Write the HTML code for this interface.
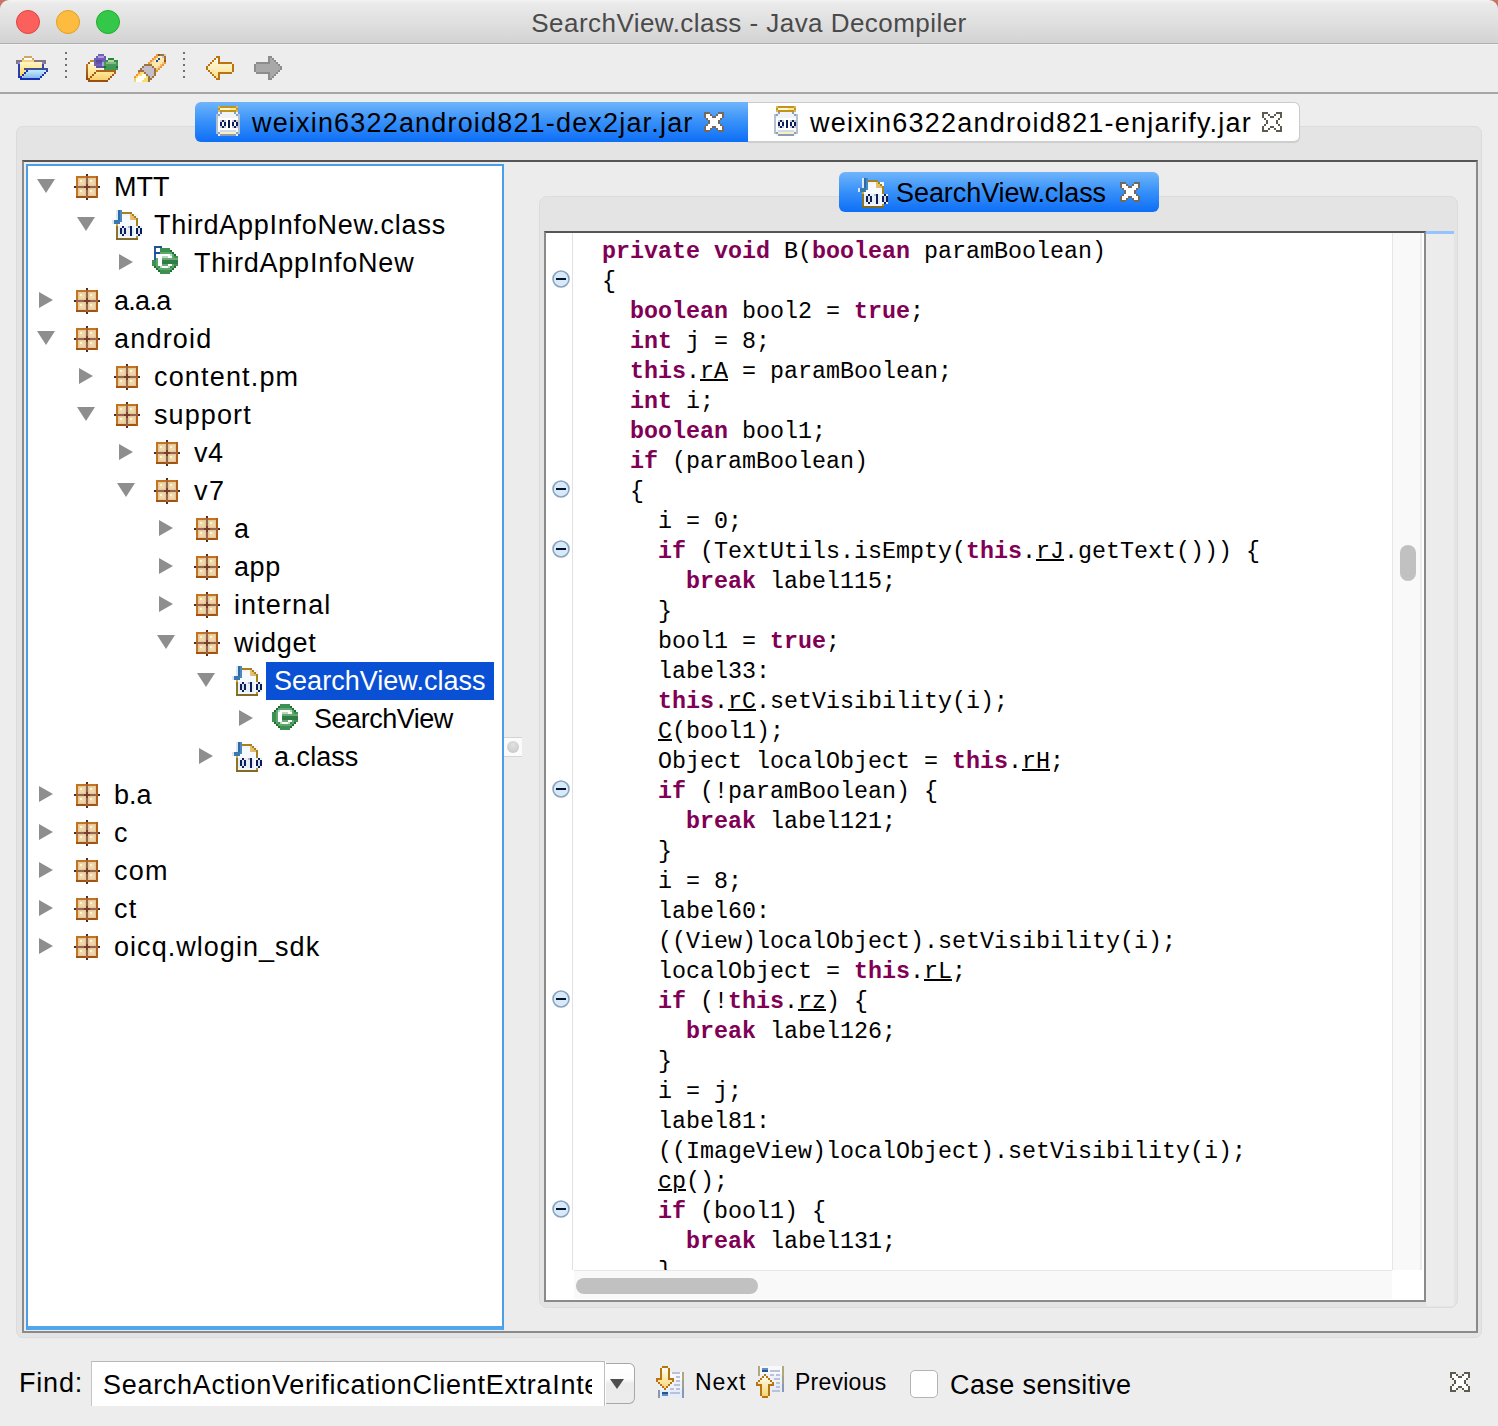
<!DOCTYPE html><html><head><meta charset="utf-8"><style>
*{margin:0;padding:0;box-sizing:border-box}
html,body{width:1498px;height:1426px;overflow:hidden;background:#ededed;font-family:"Liberation Sans",sans-serif;}
.a{position:absolute}
svg{overflow:visible}
#title{left:0;top:0;width:1498px;height:44px;background:linear-gradient(#f4f4f4,#ebebeb 3px,#d3d3d3);border-bottom:1px solid #afafaf;border-radius:9px 9px 0 0}
#title .t{left:0;width:1498px;top:-2px;text-align:center;font-size:26px;color:#4a4a4a;letter-spacing:0.45px;line-height:50px}
.tl{width:24px;height:24px;border-radius:50%;top:10px}
#tb{left:0;top:44px;width:1498px;height:48px;background:#ededed;border-top:1px solid #f3f3f3}
#tbline{left:0;top:92px;width:1498px;height:1.5px;background:#a6a6a6}
.sep{width:2px;height:26px;top:52px;background:repeating-linear-gradient(#707070 0 2px,transparent 2px 6px)}
.tab{height:40px;border-radius:6px}
.sel{background:linear-gradient(#70b5fb,#3b93f9 45%,#0d6ef7);}
.txt{white-space:nowrap;line-height:50px;font-size:27px;color:#000}
.tri{width:0;height:0}
.code{font-family:"Liberation Mono",monospace;white-space:pre;color:#000;left:1px;height:30px;line-height:30px;font-size:23.33px}
.k{color:#7f0055;font-weight:bold}
.u{text-decoration:underline;text-underline-offset:1px;text-decoration-thickness:1.5px}
</style></head><body>
<div class="a" style="left:0;top:0;width:12px;height:12px;background:#c57766"></div><div class="a" style="left:1486px;top:0;width:12px;height:12px;background:#c57766"></div>
<div id="title" class="a"><div class="a t">SearchView.class - Java Decompiler</div>
<div class="a tl" style="left:16px;background:#fc605c;border:1px solid #e0443e"></div>
<div class="a tl" style="left:56px;background:#fdbc40;border:1px solid #dea123"></div>
<div class="a tl" style="left:96px;background:#34c84a;border:1px solid #1dad2b"></div>
</div>
<div id="tb" class="a"></div><div id="tbline" class="a"></div>
<div class="a sep" style="left:65px"></div><div class="a sep" style="left:183px"></div>
<svg class="a" style="left:12px;top:50px" width="40" height="36" viewBox="0 0 40 36"><g shape-rendering="crispEdges"><defs><linearGradient id="fy" x1="0" y1="0" x2="0" y2="1"><stop offset="0" stop-color="#fff6c4"/><stop offset="1" stop-color="#ffd860"/></linearGradient><linearGradient id="fb" x1="0" y1="0" x2="0" y2="1"><stop offset="0" stop-color="#bff0ff"/><stop offset="1" stop-color="#8cb8ee"/></linearGradient></defs><rect x="12" y="6" width="8" height="2" fill="#d3a564"/><rect x="10" y="8" width="2" height="2" fill="#d3a564"/><rect x="20" y="8" width="2" height="2" fill="#d3a564"/><rect x="12" y="8" width="8" height="2" fill="#ffffff"/><rect x="4" y="10" width="30" height="4" fill="#8a7283"/><rect x="10" y="10" width="12" height="2" fill="#f4d484"/><rect x="8" y="12" width="22" height="14" fill="url(#fy)"/><rect x="6" y="12" width="2" height="16" fill="#2a3eb0"/><rect x="6" y="12" width="2" height="2" fill="#7090d8"/><rect x="30" y="12" width="2" height="6" fill="#3848a8"/><rect x="30" y="12" width="2" height="2" fill="#7090d8"/><path d="M16 20 H34 L28 28 H10 Z" fill="url(#fb)"/><rect x="12" y="18" width="24" height="2" fill="#424c9a"/><rect x="34" y="20" width="2" height="2" fill="#2a3eb0"/><rect x="32" y="22" width="2" height="2" fill="#1c34b0"/><rect x="30" y="24" width="2" height="2" fill="#1c34b0"/><rect x="28" y="26" width="2" height="2" fill="#1c34b0"/><rect x="14" y="20" width="2" height="2" fill="#1c34b0"/><rect x="12" y="22" width="2" height="2" fill="#1c34b0"/><rect x="10" y="24" width="2" height="2" fill="#1c34b0"/><rect x="6" y="26" width="4" height="2" fill="#1c34b0"/><rect x="8" y="28" width="20" height="2" fill="#1232b0"/><rect x="12" y="20" width="2" height="2" fill="#ffe070"/><rect x="10" y="22" width="2" height="2" fill="#ffdc60"/><rect x="8" y="24" width="2" height="2" fill="#ffd850"/></g></svg>
<svg class="a" style="left:82px;top:50px" width="40" height="36" viewBox="0 0 40 36"><g shape-rendering="crispEdges"><defs><linearGradient id="f2y" x1="0" y1="0" x2="0" y2="1"><stop offset="0" stop-color="#fff4c8"/><stop offset="1" stop-color="#ffd870"/></linearGradient><linearGradient id="f2f" x1="0" y1="0" x2="0" y2="1"><stop offset="0" stop-color="#ffe898"/><stop offset="1" stop-color="#f8d070"/></linearGradient><linearGradient id="f2s" x1="0" y1="0" x2="0" y2="1"><stop offset="0" stop-color="#c87a20"/><stop offset="1" stop-color="#8c4410"/></linearGradient></defs><rect x="8" y="10" width="4" height="2" fill="#d08a22"/><rect x="6" y="12" width="2" height="2" fill="#a65412"/><rect x="8" y="12" width="4" height="2" fill="#ffffff"/><rect x="6" y="14" width="8" height="16" fill="url(#f2y)"/><rect x="14" y="16" width="10" height="4" fill="#fff6d0"/><rect x="4" y="14" width="2" height="16" fill="url(#f2s)"/><rect x="16" y="4" width="6" height="2" fill="#7462b4"/><rect x="14" y="6" width="10" height="2" fill="#6c5cb0"/><rect x="16" y="6" width="6" height="2" fill="#a8a0d8"/><rect x="12" y="8" width="12" height="8" fill="#6e60b4"/><rect x="14" y="10" width="6" height="2" fill="#5848a0"/><rect x="14" y="12" width="6" height="2" fill="#6454a8"/><rect x="20" y="12" width="2" height="4" fill="#b0a0e0"/><rect x="14" y="16" width="8" height="2" fill="#6050a8"/><rect x="26" y="8" width="6" height="2" fill="#1e8a3a"/><rect x="24" y="10" width="12" height="2" fill="#2a9444"/><rect x="26" y="10" width="6" height="2" fill="#b8d898"/><rect x="22" y="12" width="14" height="8" fill="#3f9a55"/><rect x="24" y="12" width="10" height="2" fill="#88b888"/><rect x="22" y="14" width="14" height="2" fill="#4a9a5a"/><rect x="22" y="16" width="2" height="2" fill="#1a7030"/><rect x="34" y="16" width="2" height="2" fill="#1a7030"/><path d="M14 22 H32 V24 L26 30 H6 Z" fill="url(#f2f)"/><rect x="14" y="20" width="20" height="2" fill="#b06418"/><rect x="32" y="22" width="2" height="2" fill="#b06418"/><rect x="30" y="24" width="2" height="2" fill="#a85a12"/><rect x="28" y="26" width="2" height="2" fill="#a85a12"/><rect x="26" y="28" width="2" height="2" fill="#a85a12"/><rect x="12" y="22" width="2" height="2" fill="#a85a12"/><rect x="10" y="24" width="2" height="2" fill="#a85a12"/><rect x="8" y="26" width="2" height="2" fill="#a85a12"/><rect x="6" y="28" width="2" height="2" fill="#a85a12"/><rect x="6" y="30" width="20" height="2" fill="#9a5010"/></g></svg>
<svg class="a" style="left:130px;top:50px" width="40" height="34" viewBox="0 0 40 34"><g shape-rendering="crispEdges"><rect x="26" y="4" width="2" height="2" fill="#f2962a"/><rect x="28" y="4" width="2" height="2" fill="#7a5a38"/><rect x="30" y="4" width="4" height="2" fill="#9c7444"/><rect x="34" y="4" width="2" height="2" fill="#e8c890"/><rect x="24" y="6" width="2" height="2" fill="#f2962a"/><rect x="26" y="6" width="2" height="2" fill="#f4b050"/><rect x="28" y="6" width="4" height="2" fill="#fff2b8"/><rect x="32" y="6" width="2" height="2" fill="#c8c0d8"/><rect x="34" y="6" width="2" height="2" fill="#9c7444"/><rect x="22" y="8" width="2" height="2" fill="#f2962a"/><rect x="24" y="8" width="2" height="2" fill="#f0b868"/><rect x="26" y="8" width="2" height="2" fill="#fff2b8"/><rect x="28" y="8" width="2" height="2" fill="#1c4aa8"/><rect x="30" y="8" width="4" height="2" fill="#fde8a8"/><rect x="34" y="8" width="2" height="2" fill="#9c7444"/><rect x="20" y="10" width="2" height="2" fill="#f2962a"/><rect x="22" y="10" width="2" height="2" fill="#e8c890"/><rect x="24" y="10" width="2" height="2" fill="#fff2b8"/><rect x="26" y="10" width="2" height="2" fill="#1c4aa8"/><rect x="28" y="10" width="6" height="2" fill="#fde8a8"/><rect x="34" y="10" width="2" height="2" fill="#7a5a38"/><rect x="18" y="12" width="2" height="2" fill="#f2962a"/><rect x="20" y="12" width="2" height="2" fill="#e8c890"/><rect x="22" y="12" width="10" height="2" fill="#fde8a8"/><rect x="32" y="12" width="2" height="2" fill="#e8c890"/><rect x="34" y="12" width="2" height="2" fill="#f2962a"/><rect x="14" y="14" width="8" height="2" fill="#9c7444"/><rect x="22" y="14" width="8" height="2" fill="#fde8a8"/><rect x="30" y="14" width="2" height="2" fill="#f0c070"/><rect x="32" y="14" width="2" height="2" fill="#f2962a"/><rect x="12" y="16" width="2" height="2" fill="#9c7444"/><rect x="14" y="16" width="8" height="2" fill="#c4bec8"/><rect x="22" y="16" width="2" height="2" fill="#9c7444"/><rect x="24" y="16" width="4" height="2" fill="#fde8a8"/><rect x="28" y="16" width="2" height="2" fill="#e8c890"/><rect x="30" y="16" width="2" height="2" fill="#f2962a"/><rect x="10" y="18" width="2" height="2" fill="#9c7444"/><rect x="12" y="18" width="2" height="2" fill="#c8c0d8"/><rect x="14" y="18" width="10" height="2" fill="#c4bec8"/><rect x="24" y="18" width="2" height="2" fill="#9c7444"/><rect x="26" y="18" width="2" height="2" fill="#e8c890"/><rect x="28" y="18" width="2" height="2" fill="#f2962a"/><rect x="8" y="20" width="6" height="2" fill="#9c7444"/><rect x="14" y="20" width="10" height="2" fill="#c4bec8"/><rect x="24" y="20" width="2" height="2" fill="#9c7444"/><rect x="26" y="20" width="2" height="2" fill="#f2962a"/><rect x="8" y="22" width="2" height="2" fill="#f2962a"/><rect x="10" y="22" width="4" height="2" fill="#f8e070"/><rect x="14" y="22" width="2" height="2" fill="#9c7444"/><rect x="16" y="22" width="8" height="2" fill="#c4bec8"/><rect x="24" y="22" width="2" height="2" fill="#9c7444"/><rect x="6" y="24" width="2" height="2" fill="#f2962a"/><rect x="8" y="24" width="4" height="2" fill="#f8e070"/><rect x="12" y="24" width="4" height="2" fill="#fffef6"/><rect x="16" y="24" width="2" height="2" fill="#9c7444"/><rect x="18" y="24" width="6" height="2" fill="#c4bec8"/><rect x="24" y="24" width="2" height="2" fill="#9c7444"/><rect x="4" y="26" width="2" height="2" fill="#f2962a"/><rect x="6" y="26" width="2" height="2" fill="#f8e070"/><rect x="8" y="26" width="8" height="2" fill="#fffef6"/><rect x="16" y="26" width="2" height="2" fill="#f8e070"/><rect x="18" y="26" width="2" height="2" fill="#9c7444"/><rect x="20" y="26" width="2" height="2" fill="#c4bec8"/><rect x="22" y="26" width="2" height="2" fill="#9c7444"/><rect x="4" y="28" width="2" height="2" fill="#e8d070"/><rect x="6" y="28" width="8" height="2" fill="#fffef6"/><rect x="14" y="28" width="4" height="2" fill="#f8e070"/><rect x="18" y="28" width="2" height="2" fill="#9c7444"/><rect x="20" y="28" width="2" height="2" fill="#9c7444"/><rect x="4" y="30" width="2" height="2" fill="#e8d880"/><rect x="6" y="30" width="6" height="2" fill="#fffef6"/><rect x="12" y="30" width="6" height="2" fill="#f8e070"/><rect x="18" y="30" width="2" height="2" fill="#9c7444"/></g></svg>
<svg class="a" style="left:202px;top:52px" width="36" height="32" viewBox="0 0 36 32"><defs><linearGradient id="ag" x1="0" y1="0" x2="0" y2="1"><stop offset="0" stop-color="#fffbea"/><stop offset="1" stop-color="#fcdf88"/></linearGradient></defs><g shape-rendering="crispEdges"><polygon points="14,6 16,6 16,12 30,12 30,20 16,20 16,26 14,26 6,18 6,14" fill="url(#ag)"/><rect x="14" y="4" width="4" height="2" fill="#b87410"/><rect x="16" y="6" width="2" height="4" fill="#b87410"/><rect x="16" y="10" width="14" height="2" fill="#b87410"/><rect x="12" y="6" width="2" height="2" fill="#b87410"/><rect x="10" y="8" width="2" height="2" fill="#b87410"/><rect x="8" y="10" width="2" height="2" fill="#b87410"/><rect x="6" y="12" width="2" height="2" fill="#b87410"/><rect x="4" y="14" width="2" height="4" fill="#b87410"/><rect x="6" y="18" width="2" height="2" fill="#b87410"/><rect x="8" y="20" width="2" height="2" fill="#b87410"/><rect x="10" y="22" width="2" height="2" fill="#b87410"/><rect x="12" y="24" width="2" height="2" fill="#b87410"/><rect x="14" y="26" width="4" height="2" fill="#b87410"/><rect x="16" y="22" width="2" height="4" fill="#b87410"/><rect x="16" y="20" width="14" height="2" fill="#b87410"/><rect x="30" y="12" width="2" height="8" fill="#b87410"/></g></svg>
<svg class="a" style="left:250px;top:52px" width="36" height="32" viewBox="0 0 36 32"><g shape-rendering="crispEdges"><polygon points="22,6 20,6 20,12 6,12 6,20 20,20 20,26 22,26 30,18 30,14" fill="#a8a8a8"/><rect x="18" y="4" width="4" height="2" fill="#8c8c8c"/><rect x="18" y="6" width="2" height="4" fill="#8c8c8c"/><rect x="6" y="10" width="14" height="2" fill="#8c8c8c"/><rect x="22" y="6" width="2" height="2" fill="#8c8c8c"/><rect x="24" y="8" width="2" height="2" fill="#8c8c8c"/><rect x="26" y="10" width="2" height="2" fill="#8c8c8c"/><rect x="28" y="12" width="2" height="2" fill="#8c8c8c"/><rect x="30" y="14" width="2" height="4" fill="#8c8c8c"/><rect x="28" y="18" width="2" height="2" fill="#8c8c8c"/><rect x="26" y="20" width="2" height="2" fill="#8c8c8c"/><rect x="24" y="22" width="2" height="2" fill="#8c8c8c"/><rect x="22" y="24" width="2" height="2" fill="#8c8c8c"/><rect x="18" y="26" width="4" height="2" fill="#8c8c8c"/><rect x="18" y="22" width="2" height="4" fill="#8c8c8c"/><rect x="6" y="20" width="14" height="2" fill="#8c8c8c"/><rect x="4" y="12" width="2" height="8" fill="#8c8c8c"/></g></svg>
<div class="a" style="left:16px;top:126px;width:1466px;height:1212px;background:#e4e4e4;border:1px solid #dcdcdc;border-radius:7px"></div>
<div class="a" style="left:22px;top:160px;width:1456px;height:1173px;background:#ececec;border-top:2px solid #565656;border-left:2px solid #8a8a8a;border-right:2px solid #8a8a8a;border-bottom:2px solid #8a8a8a"></div>
<div class="a tab sel" style="left:195px;top:102px;width:553px;border-radius:6px 0 0 6px"></div>
<div class="a tab" style="left:748px;top:102px;width:552px;background:#fff;border:1px solid #cccccc;border-left:none;border-radius:0 6px 6px 0;box-shadow:0 1px 1px rgba(0,0,0,.10)"></div>
<svg class="a" style="left:216px;top:106px" width="24" height="30" viewBox="0 0 24 30"><g shape-rendering="crispEdges"><rect x="2" y="0" width="20" height="6" fill="#c29418"/><rect x="4" y="2" width="16" height="2" fill="#fff8d8"/><rect x="14" y="2" width="6" height="2" fill="#f8e8a0"/><rect x="2" y="0" width="2" height="2" fill="#d8b860"/><rect x="20" y="0" width="2" height="2" fill="#d8b860"/><rect x="2" y="4" width="2" height="2" fill="#d8b860"/><rect x="20" y="4" width="2" height="2" fill="#d8b860"/><rect x="2" y="6" width="20" height="24" fill="#f0f4fa"/><rect x="0" y="8" width="24" height="20" fill="#f0f4fa"/><rect x="0" y="8" width="2" height="20" fill="#b4c0d0"/><rect x="22" y="8" width="2" height="20" fill="#b4c0d0"/><rect x="2" y="8" width="2" height="2" fill="#8ca0bc"/><rect x="20" y="8" width="2" height="2" fill="#8ca0bc"/><rect x="2" y="26" width="2" height="2" fill="#8ca0bc"/><rect x="20" y="26" width="2" height="2" fill="#8ca0bc"/><rect x="4" y="6" width="2" height="2" fill="#8ca0bc"/><rect x="18" y="6" width="2" height="2" fill="#8ca0bc"/><rect x="4" y="28" width="16" height="2" fill="#8c9cb4"/><rect x="4" y="24" width="16" height="2" fill="#d0dcea"/><rect x="4" y="26" width="16" height="2" fill="#f8f0c0"/><rect x="2" y="12" width="20" height="12" fill="#ffffff"/><rect x="6" y="14" width="2" height="2" fill="#0a1f5a"/><rect x="4" y="16" width="2" height="4" fill="#0a1f5a"/><rect x="8" y="16" width="2" height="4" fill="#0a1f5a"/><rect x="6" y="20" width="2" height="2" fill="#0a1f5a"/><rect x="4" y="14" width="2" height="2" fill="#c8c8dc"/><rect x="8" y="14" width="2" height="2" fill="#c8c8dc"/><rect x="4" y="20" width="2" height="2" fill="#c8c8dc"/><rect x="8" y="20" width="2" height="2" fill="#c8c8dc"/><rect x="18" y="14" width="2" height="2" fill="#0a1f5a"/><rect x="16" y="16" width="2" height="4" fill="#0a1f5a"/><rect x="20" y="16" width="2" height="4" fill="#0a1f5a"/><rect x="18" y="20" width="2" height="2" fill="#0a1f5a"/><rect x="16" y="14" width="2" height="2" fill="#c8c8dc"/><rect x="20" y="14" width="2" height="2" fill="#c8c8dc"/><rect x="16" y="20" width="2" height="2" fill="#c8c8dc"/><rect x="20" y="20" width="2" height="2" fill="#c8c8dc"/><rect x="12" y="14" width="2" height="8" fill="#0a1f5a"/></g></svg>
<svg class="a" style="left:774px;top:106px" width="24" height="30" viewBox="0 0 24 30"><g shape-rendering="crispEdges"><rect x="2" y="0" width="20" height="6" fill="#c29418"/><rect x="4" y="2" width="16" height="2" fill="#fff8d8"/><rect x="14" y="2" width="6" height="2" fill="#f8e8a0"/><rect x="2" y="0" width="2" height="2" fill="#d8b860"/><rect x="20" y="0" width="2" height="2" fill="#d8b860"/><rect x="2" y="4" width="2" height="2" fill="#d8b860"/><rect x="20" y="4" width="2" height="2" fill="#d8b860"/><rect x="2" y="6" width="20" height="24" fill="#f0f4fa"/><rect x="0" y="8" width="24" height="20" fill="#f0f4fa"/><rect x="0" y="8" width="2" height="20" fill="#b4c0d0"/><rect x="22" y="8" width="2" height="20" fill="#b4c0d0"/><rect x="2" y="8" width="2" height="2" fill="#8ca0bc"/><rect x="20" y="8" width="2" height="2" fill="#8ca0bc"/><rect x="2" y="26" width="2" height="2" fill="#8ca0bc"/><rect x="20" y="26" width="2" height="2" fill="#8ca0bc"/><rect x="4" y="6" width="2" height="2" fill="#8ca0bc"/><rect x="18" y="6" width="2" height="2" fill="#8ca0bc"/><rect x="4" y="28" width="16" height="2" fill="#8c9cb4"/><rect x="4" y="24" width="16" height="2" fill="#d0dcea"/><rect x="4" y="26" width="16" height="2" fill="#f8f0c0"/><rect x="2" y="12" width="20" height="12" fill="#ffffff"/><rect x="6" y="14" width="2" height="2" fill="#0a1f5a"/><rect x="4" y="16" width="2" height="4" fill="#0a1f5a"/><rect x="8" y="16" width="2" height="4" fill="#0a1f5a"/><rect x="6" y="20" width="2" height="2" fill="#0a1f5a"/><rect x="4" y="14" width="2" height="2" fill="#c8c8dc"/><rect x="8" y="14" width="2" height="2" fill="#c8c8dc"/><rect x="4" y="20" width="2" height="2" fill="#c8c8dc"/><rect x="8" y="20" width="2" height="2" fill="#c8c8dc"/><rect x="18" y="14" width="2" height="2" fill="#0a1f5a"/><rect x="16" y="16" width="2" height="4" fill="#0a1f5a"/><rect x="20" y="16" width="2" height="4" fill="#0a1f5a"/><rect x="18" y="20" width="2" height="2" fill="#0a1f5a"/><rect x="16" y="14" width="2" height="2" fill="#c8c8dc"/><rect x="20" y="14" width="2" height="2" fill="#c8c8dc"/><rect x="16" y="20" width="2" height="2" fill="#c8c8dc"/><rect x="20" y="20" width="2" height="2" fill="#c8c8dc"/><rect x="12" y="14" width="2" height="8" fill="#0a1f5a"/></g></svg>
<div class="a txt" style="left:252px;top:98px;letter-spacing:1.18px">weixin6322android821-dex2jar.jar</div>
<div class="a txt" style="left:810px;top:98px;letter-spacing:1.22px">weixin6322android821-enjarify.jar</div>
<svg class="a" style="left:704px;top:112px" width="20" height="20" viewBox="0 0 20 20"><g shape-rendering="crispEdges"><rect x="2" y="2" width="2" height="2" fill="#fff"/><rect x="4" y="2" width="2" height="2" fill="#fff"/><rect x="14" y="2" width="2" height="2" fill="#fff"/><rect x="16" y="2" width="2" height="2" fill="#fff"/><rect x="2" y="4" width="2" height="2" fill="#fff"/><rect x="4" y="4" width="2" height="2" fill="#fff"/><rect x="6" y="4" width="2" height="2" fill="#fff"/><rect x="12" y="4" width="2" height="2" fill="#fff"/><rect x="14" y="4" width="2" height="2" fill="#fff"/><rect x="16" y="4" width="2" height="2" fill="#fff"/><rect x="4" y="6" width="2" height="2" fill="#fff"/><rect x="6" y="6" width="2" height="2" fill="#fff"/><rect x="8" y="6" width="2" height="2" fill="#fff"/><rect x="10" y="6" width="2" height="2" fill="#fff"/><rect x="12" y="6" width="2" height="2" fill="#fff"/><rect x="14" y="6" width="2" height="2" fill="#fff"/><rect x="6" y="8" width="2" height="2" fill="#fff"/><rect x="8" y="8" width="2" height="2" fill="#fff"/><rect x="10" y="8" width="2" height="2" fill="#fff"/><rect x="12" y="8" width="2" height="2" fill="#fff"/><rect x="6" y="10" width="2" height="2" fill="#fff"/><rect x="8" y="10" width="2" height="2" fill="#fff"/><rect x="10" y="10" width="2" height="2" fill="#fff"/><rect x="12" y="10" width="2" height="2" fill="#fff"/><rect x="4" y="12" width="2" height="2" fill="#fff"/><rect x="6" y="12" width="2" height="2" fill="#fff"/><rect x="8" y="12" width="2" height="2" fill="#fff"/><rect x="10" y="12" width="2" height="2" fill="#fff"/><rect x="12" y="12" width="2" height="2" fill="#fff"/><rect x="14" y="12" width="2" height="2" fill="#fff"/><rect x="2" y="14" width="2" height="2" fill="#fff"/><rect x="4" y="14" width="2" height="2" fill="#fff"/><rect x="6" y="14" width="2" height="2" fill="#fff"/><rect x="12" y="14" width="2" height="2" fill="#fff"/><rect x="14" y="14" width="2" height="2" fill="#fff"/><rect x="16" y="14" width="2" height="2" fill="#fff"/><rect x="2" y="16" width="2" height="2" fill="#fff"/><rect x="4" y="16" width="2" height="2" fill="#fff"/><rect x="14" y="16" width="2" height="2" fill="#fff"/><rect x="16" y="16" width="2" height="2" fill="#fff"/><rect x="0" y="0" width="2" height="2" fill="#74695a"/><rect x="2" y="0" width="2" height="2" fill="#74695a"/><rect x="4" y="0" width="2" height="2" fill="#74695a"/><rect x="14" y="0" width="2" height="2" fill="#74695a"/><rect x="16" y="0" width="2" height="2" fill="#74695a"/><rect x="18" y="0" width="2" height="2" fill="#74695a"/><rect x="0" y="2" width="2" height="2" fill="#74695a"/><rect x="6" y="2" width="2" height="2" fill="#74695a"/><rect x="12" y="2" width="2" height="2" fill="#74695a"/><rect x="18" y="2" width="2" height="2" fill="#74695a"/><rect x="0" y="4" width="2" height="2" fill="#74695a"/><rect x="8" y="4" width="2" height="2" fill="#74695a"/><rect x="10" y="4" width="2" height="2" fill="#74695a"/><rect x="18" y="4" width="2" height="2" fill="#74695a"/><rect x="2" y="6" width="2" height="2" fill="#74695a"/><rect x="16" y="6" width="2" height="2" fill="#74695a"/><rect x="4" y="8" width="2" height="2" fill="#74695a"/><rect x="14" y="8" width="2" height="2" fill="#74695a"/><rect x="4" y="10" width="2" height="2" fill="#74695a"/><rect x="14" y="10" width="2" height="2" fill="#74695a"/><rect x="2" y="12" width="2" height="2" fill="#74695a"/><rect x="16" y="12" width="2" height="2" fill="#74695a"/><rect x="0" y="14" width="2" height="2" fill="#74695a"/><rect x="8" y="14" width="2" height="2" fill="#74695a"/><rect x="10" y="14" width="2" height="2" fill="#74695a"/><rect x="18" y="14" width="2" height="2" fill="#74695a"/><rect x="0" y="16" width="2" height="2" fill="#74695a"/><rect x="6" y="16" width="2" height="2" fill="#74695a"/><rect x="12" y="16" width="2" height="2" fill="#74695a"/><rect x="18" y="16" width="2" height="2" fill="#74695a"/><rect x="0" y="18" width="2" height="2" fill="#74695a"/><rect x="2" y="18" width="2" height="2" fill="#74695a"/><rect x="4" y="18" width="2" height="2" fill="#74695a"/><rect x="14" y="18" width="2" height="2" fill="#74695a"/><rect x="16" y="18" width="2" height="2" fill="#74695a"/><rect x="18" y="18" width="2" height="2" fill="#74695a"/></g></svg>
<svg class="a" style="left:1262px;top:112px" width="20" height="20" viewBox="0 0 20 20"><g shape-rendering="crispEdges"><rect x="2" y="2" width="2" height="2" fill="#fff"/><rect x="4" y="2" width="2" height="2" fill="#fff"/><rect x="14" y="2" width="2" height="2" fill="#fff"/><rect x="16" y="2" width="2" height="2" fill="#fff"/><rect x="2" y="4" width="2" height="2" fill="#fff"/><rect x="4" y="4" width="2" height="2" fill="#fff"/><rect x="6" y="4" width="2" height="2" fill="#fff"/><rect x="12" y="4" width="2" height="2" fill="#fff"/><rect x="14" y="4" width="2" height="2" fill="#fff"/><rect x="16" y="4" width="2" height="2" fill="#fff"/><rect x="4" y="6" width="2" height="2" fill="#fff"/><rect x="6" y="6" width="2" height="2" fill="#fff"/><rect x="8" y="6" width="2" height="2" fill="#fff"/><rect x="10" y="6" width="2" height="2" fill="#fff"/><rect x="12" y="6" width="2" height="2" fill="#fff"/><rect x="14" y="6" width="2" height="2" fill="#fff"/><rect x="6" y="8" width="2" height="2" fill="#fff"/><rect x="8" y="8" width="2" height="2" fill="#fff"/><rect x="10" y="8" width="2" height="2" fill="#fff"/><rect x="12" y="8" width="2" height="2" fill="#fff"/><rect x="6" y="10" width="2" height="2" fill="#fff"/><rect x="8" y="10" width="2" height="2" fill="#fff"/><rect x="10" y="10" width="2" height="2" fill="#fff"/><rect x="12" y="10" width="2" height="2" fill="#fff"/><rect x="4" y="12" width="2" height="2" fill="#fff"/><rect x="6" y="12" width="2" height="2" fill="#fff"/><rect x="8" y="12" width="2" height="2" fill="#fff"/><rect x="10" y="12" width="2" height="2" fill="#fff"/><rect x="12" y="12" width="2" height="2" fill="#fff"/><rect x="14" y="12" width="2" height="2" fill="#fff"/><rect x="2" y="14" width="2" height="2" fill="#fff"/><rect x="4" y="14" width="2" height="2" fill="#fff"/><rect x="6" y="14" width="2" height="2" fill="#fff"/><rect x="12" y="14" width="2" height="2" fill="#fff"/><rect x="14" y="14" width="2" height="2" fill="#fff"/><rect x="16" y="14" width="2" height="2" fill="#fff"/><rect x="2" y="16" width="2" height="2" fill="#fff"/><rect x="4" y="16" width="2" height="2" fill="#fff"/><rect x="14" y="16" width="2" height="2" fill="#fff"/><rect x="16" y="16" width="2" height="2" fill="#fff"/><rect x="0" y="0" width="2" height="2" fill="#5e5b4e"/><rect x="2" y="0" width="2" height="2" fill="#5e5b4e"/><rect x="4" y="0" width="2" height="2" fill="#5e5b4e"/><rect x="14" y="0" width="2" height="2" fill="#5e5b4e"/><rect x="16" y="0" width="2" height="2" fill="#5e5b4e"/><rect x="18" y="0" width="2" height="2" fill="#5e5b4e"/><rect x="0" y="2" width="2" height="2" fill="#5e5b4e"/><rect x="6" y="2" width="2" height="2" fill="#5e5b4e"/><rect x="12" y="2" width="2" height="2" fill="#5e5b4e"/><rect x="18" y="2" width="2" height="2" fill="#5e5b4e"/><rect x="0" y="4" width="2" height="2" fill="#5e5b4e"/><rect x="8" y="4" width="2" height="2" fill="#5e5b4e"/><rect x="10" y="4" width="2" height="2" fill="#5e5b4e"/><rect x="18" y="4" width="2" height="2" fill="#5e5b4e"/><rect x="2" y="6" width="2" height="2" fill="#5e5b4e"/><rect x="16" y="6" width="2" height="2" fill="#5e5b4e"/><rect x="4" y="8" width="2" height="2" fill="#5e5b4e"/><rect x="14" y="8" width="2" height="2" fill="#5e5b4e"/><rect x="4" y="10" width="2" height="2" fill="#5e5b4e"/><rect x="14" y="10" width="2" height="2" fill="#5e5b4e"/><rect x="2" y="12" width="2" height="2" fill="#5e5b4e"/><rect x="16" y="12" width="2" height="2" fill="#5e5b4e"/><rect x="0" y="14" width="2" height="2" fill="#5e5b4e"/><rect x="8" y="14" width="2" height="2" fill="#5e5b4e"/><rect x="10" y="14" width="2" height="2" fill="#5e5b4e"/><rect x="18" y="14" width="2" height="2" fill="#5e5b4e"/><rect x="0" y="16" width="2" height="2" fill="#5e5b4e"/><rect x="6" y="16" width="2" height="2" fill="#5e5b4e"/><rect x="12" y="16" width="2" height="2" fill="#5e5b4e"/><rect x="18" y="16" width="2" height="2" fill="#5e5b4e"/><rect x="0" y="18" width="2" height="2" fill="#5e5b4e"/><rect x="2" y="18" width="2" height="2" fill="#5e5b4e"/><rect x="4" y="18" width="2" height="2" fill="#5e5b4e"/><rect x="14" y="18" width="2" height="2" fill="#5e5b4e"/><rect x="16" y="18" width="2" height="2" fill="#5e5b4e"/><rect x="18" y="18" width="2" height="2" fill="#5e5b4e"/></g></svg>
<div class="a" style="left:26px;top:164px;width:478px;height:1166px;background:#fff;border:2px solid #4a9de6;border-bottom:4px solid #52a6ee"></div>
<div class="a tri" style="left:37px;top:179px;border-left:9px solid transparent;border-right:9px solid transparent;border-top:14px solid #8e8e8e"></div>
<svg class="a" style="left:74px;top:174px" width="26" height="26" viewBox="0 0 26 26"><g shape-rendering="crispEdges"><rect x="2" y="2" width="22" height="22" fill="#c47420"/><rect x="2" y="22" width="22" height="2" fill="#a4520f"/><rect x="22" y="2" width="2" height="22" fill="#b05e18"/><rect x="4" y="4" width="18" height="18" fill="#e4c8a0"/><rect x="5" y="5" width="6" height="6" fill="#ecd4a8"/><rect x="6" y="6" width="4" height="4" fill="#efd8ac"/><rect x="15" y="5" width="6" height="6" fill="#ecd4a8"/><rect x="16" y="6" width="4" height="4" fill="#efd8ac"/><rect x="5" y="15" width="6" height="6" fill="#ecd4a8"/><rect x="6" y="16" width="4" height="4" fill="#efd8ac"/><rect x="15" y="15" width="6" height="6" fill="#ecd4a8"/><rect x="16" y="16" width="4" height="4" fill="#efd8ac"/><rect x="6" y="6" width="2" height="2" fill="#fff8c4"/><rect x="16" y="6" width="2" height="2" fill="#fff8c4"/><rect x="6" y="16" width="2" height="2" fill="#fff8c4"/><rect x="16" y="16" width="2" height="2" fill="#fff8c4"/><rect x="12" y="2" width="2" height="22" fill="#9a644c"/><rect x="2" y="12" width="22" height="2" fill="#9a644c"/><rect x="12" y="0" width="2" height="2" fill="#5c2a0c"/><rect x="12" y="24" width="2" height="2" fill="#5c2a0c"/><rect x="0" y="12" width="2" height="2" fill="#5c2a0c"/><rect x="24" y="12" width="2" height="2" fill="#5c2a0c"/><rect x="12" y="10" width="2" height="6" fill="#74402c"/><rect x="10" y="12" width="6" height="2" fill="#74402c"/></g></svg>
<div class="a txt" style="left:114px;top:162px;letter-spacing:0px;color:#000">MTT</div>
<div class="a tri" style="left:77px;top:217px;border-left:9px solid transparent;border-right:9px solid transparent;border-top:14px solid #8e8e8e"></div>
<svg class="a" style="left:112px;top:208px" width="32" height="34" viewBox="0 0 32 34"><g shape-rendering="crispEdges"><rect x="4" y="6" width="22" height="26" fill="#f2f6fc"/><rect x="6" y="8" width="18" height="20" fill="#f6f9fd"/><rect x="18" y="6" width="2" height="6" fill="#e4c070"/><rect x="20" y="8" width="2" height="4" fill="#e0bc68"/><rect x="22" y="10" width="2" height="2" fill="#dcb868"/><rect x="10" y="4" width="10" height="2" fill="#a8801c"/><rect x="20" y="6" width="2" height="2" fill="#a8801c"/><rect x="22" y="8" width="2" height="2" fill="#a8801c"/><rect x="24" y="10" width="2" height="8" fill="#a8801c"/><rect x="24" y="28" width="2" height="2" fill="#b89030"/><rect x="4" y="16" width="2" height="16" fill="#8c7428"/><rect x="4" y="16" width="2" height="2" fill="#d8a830"/><rect x="4" y="30" width="22" height="2" fill="#806a28"/><rect x="4" y="2" width="2" height="12" fill="#dce8f2"/><rect x="6" y="2" width="4" height="12" fill="#2c6aa8"/><rect x="8" y="2" width="2" height="12" fill="#4a88c0"/><rect x="0" y="12" width="2" height="4" fill="#dce8f2"/><rect x="2" y="12" width="6" height="4" fill="#3a78b0"/><rect x="6" y="18" width="10" height="10" fill="#e8eef6"/><rect x="16" y="18" width="6" height="10" fill="#e8eef6"/><rect x="24" y="18" width="6" height="10" fill="#e8eef6"/><rect x="10" y="18" width="2" height="2" fill="#0a1f5a"/><rect x="8" y="20" width="2" height="6" fill="#0a1f5a"/><rect x="12" y="20" width="2" height="6" fill="#0a1f5a"/><rect x="10" y="26" width="2" height="2" fill="#0a1f5a"/><rect x="10" y="20" width="2" height="6" fill="#d8dde8"/><rect x="26" y="18" width="2" height="2" fill="#0a1f5a"/><rect x="24" y="20" width="2" height="6" fill="#0a1f5a"/><rect x="28" y="20" width="2" height="6" fill="#0a1f5a"/><rect x="26" y="26" width="2" height="2" fill="#0a1f5a"/><rect x="26" y="20" width="2" height="6" fill="#d8dde8"/><rect x="18" y="18" width="2" height="10" fill="#0a1f5a"/><rect x="16" y="18" width="2" height="2" fill="#b0b8cc"/></g></svg>
<div class="a txt" style="left:154px;top:200px;letter-spacing:0.75px;color:#000">ThirdAppInfoNew.class</div>
<div class="a tri" style="left:119px;top:254px;border-top:8.5px solid transparent;border-bottom:8.5px solid transparent;border-left:14.5px solid #8e8e8e"></div>
<svg class="a" style="left:152px;top:248px" width="26" height="26" viewBox="0 0 26 26"><g shape-rendering="crispEdges"><rect x="8" y="0" width="10" height="2" fill="#3e8f52"/><rect x="6" y="2" width="14" height="2" fill="#3e8f52"/><rect x="4" y="4" width="18" height="2" fill="#3e8f52"/><rect x="2" y="6" width="22" height="2" fill="#3e8f52"/><rect x="0" y="8" width="26" height="2" fill="#3e8f52"/><rect x="0" y="10" width="26" height="2" fill="#3e8f52"/><rect x="0" y="12" width="26" height="2" fill="#3e8f52"/><rect x="0" y="14" width="26" height="2" fill="#3e8f52"/><rect x="0" y="16" width="26" height="2" fill="#3e8f52"/><rect x="2" y="18" width="22" height="2" fill="#3e8f52"/><rect x="4" y="20" width="18" height="2" fill="#3e8f52"/><rect x="6" y="22" width="14" height="2" fill="#3e8f52"/><rect x="8" y="24" width="10" height="2" fill="#3e8f52"/><rect x="6" y="4" width="14" height="2" fill="#5aa86a"/><rect x="4" y="6" width="2" height="14" fill="#5aa86a"/><rect x="20" y="6" width="2" height="14" fill="#5aa86a"/><rect x="6" y="20" width="14" height="2" fill="#5aa86a"/><rect x="6" y="2" width="2" height="2" fill="#1e6e34"/><rect x="18" y="2" width="2" height="2" fill="#1e6e34"/><rect x="4" y="4" width="2" height="2" fill="#1e6e34"/><rect x="20" y="4" width="2" height="2" fill="#1e6e34"/><rect x="2" y="6" width="2" height="2" fill="#1e6e34"/><rect x="22" y="6" width="2" height="2" fill="#1e6e34"/><rect x="2" y="18" width="2" height="2" fill="#1e6e34"/><rect x="22" y="18" width="2" height="2" fill="#1e6e34"/><rect x="4" y="20" width="2" height="2" fill="#1e6e34"/><rect x="20" y="20" width="2" height="2" fill="#1e6e34"/><rect x="6" y="22" width="2" height="2" fill="#1e6e34"/><rect x="18" y="22" width="2" height="2" fill="#1e6e34"/><rect x="8" y="6" width="10" height="2" fill="#ffffff"/><rect x="6" y="6" width="2" height="2" fill="#b8dcbc"/><rect x="18" y="6" width="2" height="2" fill="#b8dcbc"/><rect x="6" y="8" width="4" height="10" fill="#ffffff"/><rect x="16" y="8" width="4" height="2" fill="#ffffff"/><rect x="10" y="8" width="6" height="2" fill="#b8dcbc"/><rect x="16" y="16" width="4" height="2" fill="#ffffff"/><rect x="10" y="16" width="6" height="2" fill="#6aa874"/><rect x="10" y="18" width="6" height="2" fill="#ffffff"/><rect x="8" y="18" width="2" height="2" fill="#b8dcbc"/><rect x="16" y="18" width="2" height="2" fill="#b8dcbc"/><rect x="10" y="10" width="16" height="2" fill="#6aa874"/><rect x="10" y="12" width="16" height="4" fill="#2f7d44"/></g></svg><svg class="a" style="left:152px;top:246px" width="12" height="16" viewBox="0 0 12 16"><g shape-rendering="crispEdges"><rect x="0" y="2" width="8" height="10" fill="#fff"/><rect x="0" y="12" width="2" height="2" fill="#fff"/><rect x="2" y="0" width="2" height="14" fill="#2a5aa0"/><rect x="2" y="0" width="8" height="2" fill="#1f4f98"/><rect x="2" y="6" width="6" height="2" fill="#1f4f98"/></g></svg>
<div class="a txt" style="left:194px;top:238px;letter-spacing:0.79px;color:#000">ThirdAppInfoNew</div>
<div class="a tri" style="left:39px;top:292px;border-top:8.5px solid transparent;border-bottom:8.5px solid transparent;border-left:14.5px solid #8e8e8e"></div>
<svg class="a" style="left:74px;top:288px" width="26" height="26" viewBox="0 0 26 26"><g shape-rendering="crispEdges"><rect x="2" y="2" width="22" height="22" fill="#c47420"/><rect x="2" y="22" width="22" height="2" fill="#a4520f"/><rect x="22" y="2" width="2" height="22" fill="#b05e18"/><rect x="4" y="4" width="18" height="18" fill="#e4c8a0"/><rect x="5" y="5" width="6" height="6" fill="#ecd4a8"/><rect x="6" y="6" width="4" height="4" fill="#efd8ac"/><rect x="15" y="5" width="6" height="6" fill="#ecd4a8"/><rect x="16" y="6" width="4" height="4" fill="#efd8ac"/><rect x="5" y="15" width="6" height="6" fill="#ecd4a8"/><rect x="6" y="16" width="4" height="4" fill="#efd8ac"/><rect x="15" y="15" width="6" height="6" fill="#ecd4a8"/><rect x="16" y="16" width="4" height="4" fill="#efd8ac"/><rect x="6" y="6" width="2" height="2" fill="#fff8c4"/><rect x="16" y="6" width="2" height="2" fill="#fff8c4"/><rect x="6" y="16" width="2" height="2" fill="#fff8c4"/><rect x="16" y="16" width="2" height="2" fill="#fff8c4"/><rect x="12" y="2" width="2" height="22" fill="#9a644c"/><rect x="2" y="12" width="22" height="2" fill="#9a644c"/><rect x="12" y="0" width="2" height="2" fill="#5c2a0c"/><rect x="12" y="24" width="2" height="2" fill="#5c2a0c"/><rect x="0" y="12" width="2" height="2" fill="#5c2a0c"/><rect x="24" y="12" width="2" height="2" fill="#5c2a0c"/><rect x="12" y="10" width="2" height="6" fill="#74402c"/><rect x="10" y="12" width="6" height="2" fill="#74402c"/></g></svg>
<div class="a txt" style="left:114px;top:276px;letter-spacing:-0.7px;color:#000">a.a.a</div>
<div class="a tri" style="left:37px;top:331px;border-left:9px solid transparent;border-right:9px solid transparent;border-top:14px solid #8e8e8e"></div>
<svg class="a" style="left:74px;top:326px" width="26" height="26" viewBox="0 0 26 26"><g shape-rendering="crispEdges"><rect x="2" y="2" width="22" height="22" fill="#c47420"/><rect x="2" y="22" width="22" height="2" fill="#a4520f"/><rect x="22" y="2" width="2" height="22" fill="#b05e18"/><rect x="4" y="4" width="18" height="18" fill="#e4c8a0"/><rect x="5" y="5" width="6" height="6" fill="#ecd4a8"/><rect x="6" y="6" width="4" height="4" fill="#efd8ac"/><rect x="15" y="5" width="6" height="6" fill="#ecd4a8"/><rect x="16" y="6" width="4" height="4" fill="#efd8ac"/><rect x="5" y="15" width="6" height="6" fill="#ecd4a8"/><rect x="6" y="16" width="4" height="4" fill="#efd8ac"/><rect x="15" y="15" width="6" height="6" fill="#ecd4a8"/><rect x="16" y="16" width="4" height="4" fill="#efd8ac"/><rect x="6" y="6" width="2" height="2" fill="#fff8c4"/><rect x="16" y="6" width="2" height="2" fill="#fff8c4"/><rect x="6" y="16" width="2" height="2" fill="#fff8c4"/><rect x="16" y="16" width="2" height="2" fill="#fff8c4"/><rect x="12" y="2" width="2" height="22" fill="#9a644c"/><rect x="2" y="12" width="22" height="2" fill="#9a644c"/><rect x="12" y="0" width="2" height="2" fill="#5c2a0c"/><rect x="12" y="24" width="2" height="2" fill="#5c2a0c"/><rect x="0" y="12" width="2" height="2" fill="#5c2a0c"/><rect x="24" y="12" width="2" height="2" fill="#5c2a0c"/><rect x="12" y="10" width="2" height="6" fill="#74402c"/><rect x="10" y="12" width="6" height="2" fill="#74402c"/></g></svg>
<div class="a txt" style="left:114px;top:314px;letter-spacing:1.2px;color:#000">android</div>
<div class="a tri" style="left:79px;top:368px;border-top:8.5px solid transparent;border-bottom:8.5px solid transparent;border-left:14.5px solid #8e8e8e"></div>
<svg class="a" style="left:114px;top:364px" width="26" height="26" viewBox="0 0 26 26"><g shape-rendering="crispEdges"><rect x="2" y="2" width="22" height="22" fill="#c47420"/><rect x="2" y="22" width="22" height="2" fill="#a4520f"/><rect x="22" y="2" width="2" height="22" fill="#b05e18"/><rect x="4" y="4" width="18" height="18" fill="#e4c8a0"/><rect x="5" y="5" width="6" height="6" fill="#ecd4a8"/><rect x="6" y="6" width="4" height="4" fill="#efd8ac"/><rect x="15" y="5" width="6" height="6" fill="#ecd4a8"/><rect x="16" y="6" width="4" height="4" fill="#efd8ac"/><rect x="5" y="15" width="6" height="6" fill="#ecd4a8"/><rect x="6" y="16" width="4" height="4" fill="#efd8ac"/><rect x="15" y="15" width="6" height="6" fill="#ecd4a8"/><rect x="16" y="16" width="4" height="4" fill="#efd8ac"/><rect x="6" y="6" width="2" height="2" fill="#fff8c4"/><rect x="16" y="6" width="2" height="2" fill="#fff8c4"/><rect x="6" y="16" width="2" height="2" fill="#fff8c4"/><rect x="16" y="16" width="2" height="2" fill="#fff8c4"/><rect x="12" y="2" width="2" height="22" fill="#9a644c"/><rect x="2" y="12" width="22" height="2" fill="#9a644c"/><rect x="12" y="0" width="2" height="2" fill="#5c2a0c"/><rect x="12" y="24" width="2" height="2" fill="#5c2a0c"/><rect x="0" y="12" width="2" height="2" fill="#5c2a0c"/><rect x="24" y="12" width="2" height="2" fill="#5c2a0c"/><rect x="12" y="10" width="2" height="6" fill="#74402c"/><rect x="10" y="12" width="6" height="2" fill="#74402c"/></g></svg>
<div class="a txt" style="left:154px;top:352px;letter-spacing:1.17px;color:#000">content.pm</div>
<div class="a tri" style="left:77px;top:407px;border-left:9px solid transparent;border-right:9px solid transparent;border-top:14px solid #8e8e8e"></div>
<svg class="a" style="left:114px;top:402px" width="26" height="26" viewBox="0 0 26 26"><g shape-rendering="crispEdges"><rect x="2" y="2" width="22" height="22" fill="#c47420"/><rect x="2" y="22" width="22" height="2" fill="#a4520f"/><rect x="22" y="2" width="2" height="22" fill="#b05e18"/><rect x="4" y="4" width="18" height="18" fill="#e4c8a0"/><rect x="5" y="5" width="6" height="6" fill="#ecd4a8"/><rect x="6" y="6" width="4" height="4" fill="#efd8ac"/><rect x="15" y="5" width="6" height="6" fill="#ecd4a8"/><rect x="16" y="6" width="4" height="4" fill="#efd8ac"/><rect x="5" y="15" width="6" height="6" fill="#ecd4a8"/><rect x="6" y="16" width="4" height="4" fill="#efd8ac"/><rect x="15" y="15" width="6" height="6" fill="#ecd4a8"/><rect x="16" y="16" width="4" height="4" fill="#efd8ac"/><rect x="6" y="6" width="2" height="2" fill="#fff8c4"/><rect x="16" y="6" width="2" height="2" fill="#fff8c4"/><rect x="6" y="16" width="2" height="2" fill="#fff8c4"/><rect x="16" y="16" width="2" height="2" fill="#fff8c4"/><rect x="12" y="2" width="2" height="22" fill="#9a644c"/><rect x="2" y="12" width="22" height="2" fill="#9a644c"/><rect x="12" y="0" width="2" height="2" fill="#5c2a0c"/><rect x="12" y="24" width="2" height="2" fill="#5c2a0c"/><rect x="0" y="12" width="2" height="2" fill="#5c2a0c"/><rect x="24" y="12" width="2" height="2" fill="#5c2a0c"/><rect x="12" y="10" width="2" height="6" fill="#74402c"/><rect x="10" y="12" width="6" height="2" fill="#74402c"/></g></svg>
<div class="a txt" style="left:154px;top:390px;letter-spacing:1.1px;color:#000">support</div>
<div class="a tri" style="left:119px;top:444px;border-top:8.5px solid transparent;border-bottom:8.5px solid transparent;border-left:14.5px solid #8e8e8e"></div>
<svg class="a" style="left:154px;top:440px" width="26" height="26" viewBox="0 0 26 26"><g shape-rendering="crispEdges"><rect x="2" y="2" width="22" height="22" fill="#c47420"/><rect x="2" y="22" width="22" height="2" fill="#a4520f"/><rect x="22" y="2" width="2" height="22" fill="#b05e18"/><rect x="4" y="4" width="18" height="18" fill="#e4c8a0"/><rect x="5" y="5" width="6" height="6" fill="#ecd4a8"/><rect x="6" y="6" width="4" height="4" fill="#efd8ac"/><rect x="15" y="5" width="6" height="6" fill="#ecd4a8"/><rect x="16" y="6" width="4" height="4" fill="#efd8ac"/><rect x="5" y="15" width="6" height="6" fill="#ecd4a8"/><rect x="6" y="16" width="4" height="4" fill="#efd8ac"/><rect x="15" y="15" width="6" height="6" fill="#ecd4a8"/><rect x="16" y="16" width="4" height="4" fill="#efd8ac"/><rect x="6" y="6" width="2" height="2" fill="#fff8c4"/><rect x="16" y="6" width="2" height="2" fill="#fff8c4"/><rect x="6" y="16" width="2" height="2" fill="#fff8c4"/><rect x="16" y="16" width="2" height="2" fill="#fff8c4"/><rect x="12" y="2" width="2" height="22" fill="#9a644c"/><rect x="2" y="12" width="22" height="2" fill="#9a644c"/><rect x="12" y="0" width="2" height="2" fill="#5c2a0c"/><rect x="12" y="24" width="2" height="2" fill="#5c2a0c"/><rect x="0" y="12" width="2" height="2" fill="#5c2a0c"/><rect x="24" y="12" width="2" height="2" fill="#5c2a0c"/><rect x="12" y="10" width="2" height="6" fill="#74402c"/><rect x="10" y="12" width="6" height="2" fill="#74402c"/></g></svg>
<div class="a txt" style="left:194px;top:428px;letter-spacing:0.5px;color:#000">v4</div>
<div class="a tri" style="left:117px;top:483px;border-left:9px solid transparent;border-right:9px solid transparent;border-top:14px solid #8e8e8e"></div>
<svg class="a" style="left:154px;top:478px" width="26" height="26" viewBox="0 0 26 26"><g shape-rendering="crispEdges"><rect x="2" y="2" width="22" height="22" fill="#c47420"/><rect x="2" y="22" width="22" height="2" fill="#a4520f"/><rect x="22" y="2" width="2" height="22" fill="#b05e18"/><rect x="4" y="4" width="18" height="18" fill="#e4c8a0"/><rect x="5" y="5" width="6" height="6" fill="#ecd4a8"/><rect x="6" y="6" width="4" height="4" fill="#efd8ac"/><rect x="15" y="5" width="6" height="6" fill="#ecd4a8"/><rect x="16" y="6" width="4" height="4" fill="#efd8ac"/><rect x="5" y="15" width="6" height="6" fill="#ecd4a8"/><rect x="6" y="16" width="4" height="4" fill="#efd8ac"/><rect x="15" y="15" width="6" height="6" fill="#ecd4a8"/><rect x="16" y="16" width="4" height="4" fill="#efd8ac"/><rect x="6" y="6" width="2" height="2" fill="#fff8c4"/><rect x="16" y="6" width="2" height="2" fill="#fff8c4"/><rect x="6" y="16" width="2" height="2" fill="#fff8c4"/><rect x="16" y="16" width="2" height="2" fill="#fff8c4"/><rect x="12" y="2" width="2" height="22" fill="#9a644c"/><rect x="2" y="12" width="22" height="2" fill="#9a644c"/><rect x="12" y="0" width="2" height="2" fill="#5c2a0c"/><rect x="12" y="24" width="2" height="2" fill="#5c2a0c"/><rect x="0" y="12" width="2" height="2" fill="#5c2a0c"/><rect x="24" y="12" width="2" height="2" fill="#5c2a0c"/><rect x="12" y="10" width="2" height="6" fill="#74402c"/><rect x="10" y="12" width="6" height="2" fill="#74402c"/></g></svg>
<div class="a txt" style="left:194px;top:466px;letter-spacing:1.5px;color:#000">v7</div>
<div class="a tri" style="left:159px;top:520px;border-top:8.5px solid transparent;border-bottom:8.5px solid transparent;border-left:14.5px solid #8e8e8e"></div>
<svg class="a" style="left:194px;top:516px" width="26" height="26" viewBox="0 0 26 26"><g shape-rendering="crispEdges"><rect x="2" y="2" width="22" height="22" fill="#c47420"/><rect x="2" y="22" width="22" height="2" fill="#a4520f"/><rect x="22" y="2" width="2" height="22" fill="#b05e18"/><rect x="4" y="4" width="18" height="18" fill="#e4c8a0"/><rect x="5" y="5" width="6" height="6" fill="#ecd4a8"/><rect x="6" y="6" width="4" height="4" fill="#efd8ac"/><rect x="15" y="5" width="6" height="6" fill="#ecd4a8"/><rect x="16" y="6" width="4" height="4" fill="#efd8ac"/><rect x="5" y="15" width="6" height="6" fill="#ecd4a8"/><rect x="6" y="16" width="4" height="4" fill="#efd8ac"/><rect x="15" y="15" width="6" height="6" fill="#ecd4a8"/><rect x="16" y="16" width="4" height="4" fill="#efd8ac"/><rect x="6" y="6" width="2" height="2" fill="#fff8c4"/><rect x="16" y="6" width="2" height="2" fill="#fff8c4"/><rect x="6" y="16" width="2" height="2" fill="#fff8c4"/><rect x="16" y="16" width="2" height="2" fill="#fff8c4"/><rect x="12" y="2" width="2" height="22" fill="#9a644c"/><rect x="2" y="12" width="22" height="2" fill="#9a644c"/><rect x="12" y="0" width="2" height="2" fill="#5c2a0c"/><rect x="12" y="24" width="2" height="2" fill="#5c2a0c"/><rect x="0" y="12" width="2" height="2" fill="#5c2a0c"/><rect x="24" y="12" width="2" height="2" fill="#5c2a0c"/><rect x="12" y="10" width="2" height="6" fill="#74402c"/><rect x="10" y="12" width="6" height="2" fill="#74402c"/></g></svg>
<div class="a txt" style="left:234px;top:504px;letter-spacing:0px;color:#000">a</div>
<div class="a tri" style="left:159px;top:558px;border-top:8.5px solid transparent;border-bottom:8.5px solid transparent;border-left:14.5px solid #8e8e8e"></div>
<svg class="a" style="left:194px;top:554px" width="26" height="26" viewBox="0 0 26 26"><g shape-rendering="crispEdges"><rect x="2" y="2" width="22" height="22" fill="#c47420"/><rect x="2" y="22" width="22" height="2" fill="#a4520f"/><rect x="22" y="2" width="2" height="22" fill="#b05e18"/><rect x="4" y="4" width="18" height="18" fill="#e4c8a0"/><rect x="5" y="5" width="6" height="6" fill="#ecd4a8"/><rect x="6" y="6" width="4" height="4" fill="#efd8ac"/><rect x="15" y="5" width="6" height="6" fill="#ecd4a8"/><rect x="16" y="6" width="4" height="4" fill="#efd8ac"/><rect x="5" y="15" width="6" height="6" fill="#ecd4a8"/><rect x="6" y="16" width="4" height="4" fill="#efd8ac"/><rect x="15" y="15" width="6" height="6" fill="#ecd4a8"/><rect x="16" y="16" width="4" height="4" fill="#efd8ac"/><rect x="6" y="6" width="2" height="2" fill="#fff8c4"/><rect x="16" y="6" width="2" height="2" fill="#fff8c4"/><rect x="6" y="16" width="2" height="2" fill="#fff8c4"/><rect x="16" y="16" width="2" height="2" fill="#fff8c4"/><rect x="12" y="2" width="2" height="22" fill="#9a644c"/><rect x="2" y="12" width="22" height="2" fill="#9a644c"/><rect x="12" y="0" width="2" height="2" fill="#5c2a0c"/><rect x="12" y="24" width="2" height="2" fill="#5c2a0c"/><rect x="0" y="12" width="2" height="2" fill="#5c2a0c"/><rect x="24" y="12" width="2" height="2" fill="#5c2a0c"/><rect x="12" y="10" width="2" height="6" fill="#74402c"/><rect x="10" y="12" width="6" height="2" fill="#74402c"/></g></svg>
<div class="a txt" style="left:234px;top:542px;letter-spacing:0.6px;color:#000">app</div>
<div class="a tri" style="left:159px;top:596px;border-top:8.5px solid transparent;border-bottom:8.5px solid transparent;border-left:14.5px solid #8e8e8e"></div>
<svg class="a" style="left:194px;top:592px" width="26" height="26" viewBox="0 0 26 26"><g shape-rendering="crispEdges"><rect x="2" y="2" width="22" height="22" fill="#c47420"/><rect x="2" y="22" width="22" height="2" fill="#a4520f"/><rect x="22" y="2" width="2" height="22" fill="#b05e18"/><rect x="4" y="4" width="18" height="18" fill="#e4c8a0"/><rect x="5" y="5" width="6" height="6" fill="#ecd4a8"/><rect x="6" y="6" width="4" height="4" fill="#efd8ac"/><rect x="15" y="5" width="6" height="6" fill="#ecd4a8"/><rect x="16" y="6" width="4" height="4" fill="#efd8ac"/><rect x="5" y="15" width="6" height="6" fill="#ecd4a8"/><rect x="6" y="16" width="4" height="4" fill="#efd8ac"/><rect x="15" y="15" width="6" height="6" fill="#ecd4a8"/><rect x="16" y="16" width="4" height="4" fill="#efd8ac"/><rect x="6" y="6" width="2" height="2" fill="#fff8c4"/><rect x="16" y="6" width="2" height="2" fill="#fff8c4"/><rect x="6" y="16" width="2" height="2" fill="#fff8c4"/><rect x="16" y="16" width="2" height="2" fill="#fff8c4"/><rect x="12" y="2" width="2" height="22" fill="#9a644c"/><rect x="2" y="12" width="22" height="2" fill="#9a644c"/><rect x="12" y="0" width="2" height="2" fill="#5c2a0c"/><rect x="12" y="24" width="2" height="2" fill="#5c2a0c"/><rect x="0" y="12" width="2" height="2" fill="#5c2a0c"/><rect x="24" y="12" width="2" height="2" fill="#5c2a0c"/><rect x="12" y="10" width="2" height="6" fill="#74402c"/><rect x="10" y="12" width="6" height="2" fill="#74402c"/></g></svg>
<div class="a txt" style="left:234px;top:580px;letter-spacing:1.1px;color:#000">internal</div>
<div class="a tri" style="left:157px;top:635px;border-left:9px solid transparent;border-right:9px solid transparent;border-top:14px solid #8e8e8e"></div>
<svg class="a" style="left:194px;top:630px" width="26" height="26" viewBox="0 0 26 26"><g shape-rendering="crispEdges"><rect x="2" y="2" width="22" height="22" fill="#c47420"/><rect x="2" y="22" width="22" height="2" fill="#a4520f"/><rect x="22" y="2" width="2" height="22" fill="#b05e18"/><rect x="4" y="4" width="18" height="18" fill="#e4c8a0"/><rect x="5" y="5" width="6" height="6" fill="#ecd4a8"/><rect x="6" y="6" width="4" height="4" fill="#efd8ac"/><rect x="15" y="5" width="6" height="6" fill="#ecd4a8"/><rect x="16" y="6" width="4" height="4" fill="#efd8ac"/><rect x="5" y="15" width="6" height="6" fill="#ecd4a8"/><rect x="6" y="16" width="4" height="4" fill="#efd8ac"/><rect x="15" y="15" width="6" height="6" fill="#ecd4a8"/><rect x="16" y="16" width="4" height="4" fill="#efd8ac"/><rect x="6" y="6" width="2" height="2" fill="#fff8c4"/><rect x="16" y="6" width="2" height="2" fill="#fff8c4"/><rect x="6" y="16" width="2" height="2" fill="#fff8c4"/><rect x="16" y="16" width="2" height="2" fill="#fff8c4"/><rect x="12" y="2" width="2" height="22" fill="#9a644c"/><rect x="2" y="12" width="22" height="2" fill="#9a644c"/><rect x="12" y="0" width="2" height="2" fill="#5c2a0c"/><rect x="12" y="24" width="2" height="2" fill="#5c2a0c"/><rect x="0" y="12" width="2" height="2" fill="#5c2a0c"/><rect x="24" y="12" width="2" height="2" fill="#5c2a0c"/><rect x="12" y="10" width="2" height="6" fill="#74402c"/><rect x="10" y="12" width="6" height="2" fill="#74402c"/></g></svg>
<div class="a txt" style="left:234px;top:618px;letter-spacing:0.74px;color:#000">widget</div>
<div class="a tri" style="left:197px;top:673px;border-left:9px solid transparent;border-right:9px solid transparent;border-top:14px solid #8e8e8e"></div>
<svg class="a" style="left:232px;top:664px" width="32" height="34" viewBox="0 0 32 34"><g shape-rendering="crispEdges"><rect x="4" y="6" width="22" height="26" fill="#f2f6fc"/><rect x="6" y="8" width="18" height="20" fill="#f6f9fd"/><rect x="18" y="6" width="2" height="6" fill="#e4c070"/><rect x="20" y="8" width="2" height="4" fill="#e0bc68"/><rect x="22" y="10" width="2" height="2" fill="#dcb868"/><rect x="10" y="4" width="10" height="2" fill="#a8801c"/><rect x="20" y="6" width="2" height="2" fill="#a8801c"/><rect x="22" y="8" width="2" height="2" fill="#a8801c"/><rect x="24" y="10" width="2" height="8" fill="#a8801c"/><rect x="24" y="28" width="2" height="2" fill="#b89030"/><rect x="4" y="16" width="2" height="16" fill="#8c7428"/><rect x="4" y="16" width="2" height="2" fill="#d8a830"/><rect x="4" y="30" width="22" height="2" fill="#806a28"/><rect x="4" y="2" width="2" height="12" fill="#dce8f2"/><rect x="6" y="2" width="4" height="12" fill="#2c6aa8"/><rect x="8" y="2" width="2" height="12" fill="#4a88c0"/><rect x="0" y="12" width="2" height="4" fill="#dce8f2"/><rect x="2" y="12" width="6" height="4" fill="#3a78b0"/><rect x="6" y="18" width="10" height="10" fill="#e8eef6"/><rect x="16" y="18" width="6" height="10" fill="#e8eef6"/><rect x="24" y="18" width="6" height="10" fill="#e8eef6"/><rect x="10" y="18" width="2" height="2" fill="#0a1f5a"/><rect x="8" y="20" width="2" height="6" fill="#0a1f5a"/><rect x="12" y="20" width="2" height="6" fill="#0a1f5a"/><rect x="10" y="26" width="2" height="2" fill="#0a1f5a"/><rect x="10" y="20" width="2" height="6" fill="#d8dde8"/><rect x="26" y="18" width="2" height="2" fill="#0a1f5a"/><rect x="24" y="20" width="2" height="6" fill="#0a1f5a"/><rect x="28" y="20" width="2" height="6" fill="#0a1f5a"/><rect x="26" y="26" width="2" height="2" fill="#0a1f5a"/><rect x="26" y="20" width="2" height="6" fill="#d8dde8"/><rect x="18" y="18" width="2" height="10" fill="#0a1f5a"/><rect x="16" y="18" width="2" height="2" fill="#b0b8cc"/></g></svg>
<div class="a" style="left:266px;top:662px;width:228px;height:38px;background:#0a50d4"></div>
<div class="a txt" style="left:274px;top:656px;letter-spacing:0.03px;color:#fff">SearchView.class</div>
<div class="a tri" style="left:239px;top:710px;border-top:8.5px solid transparent;border-bottom:8.5px solid transparent;border-left:14.5px solid #8e8e8e"></div>
<svg class="a" style="left:272px;top:704px" width="26" height="26" viewBox="0 0 26 26"><g shape-rendering="crispEdges"><rect x="8" y="0" width="10" height="2" fill="#3e8f52"/><rect x="6" y="2" width="14" height="2" fill="#3e8f52"/><rect x="4" y="4" width="18" height="2" fill="#3e8f52"/><rect x="2" y="6" width="22" height="2" fill="#3e8f52"/><rect x="0" y="8" width="26" height="2" fill="#3e8f52"/><rect x="0" y="10" width="26" height="2" fill="#3e8f52"/><rect x="0" y="12" width="26" height="2" fill="#3e8f52"/><rect x="0" y="14" width="26" height="2" fill="#3e8f52"/><rect x="0" y="16" width="26" height="2" fill="#3e8f52"/><rect x="2" y="18" width="22" height="2" fill="#3e8f52"/><rect x="4" y="20" width="18" height="2" fill="#3e8f52"/><rect x="6" y="22" width="14" height="2" fill="#3e8f52"/><rect x="8" y="24" width="10" height="2" fill="#3e8f52"/><rect x="6" y="4" width="14" height="2" fill="#5aa86a"/><rect x="4" y="6" width="2" height="14" fill="#5aa86a"/><rect x="20" y="6" width="2" height="14" fill="#5aa86a"/><rect x="6" y="20" width="14" height="2" fill="#5aa86a"/><rect x="6" y="2" width="2" height="2" fill="#1e6e34"/><rect x="18" y="2" width="2" height="2" fill="#1e6e34"/><rect x="4" y="4" width="2" height="2" fill="#1e6e34"/><rect x="20" y="4" width="2" height="2" fill="#1e6e34"/><rect x="2" y="6" width="2" height="2" fill="#1e6e34"/><rect x="22" y="6" width="2" height="2" fill="#1e6e34"/><rect x="2" y="18" width="2" height="2" fill="#1e6e34"/><rect x="22" y="18" width="2" height="2" fill="#1e6e34"/><rect x="4" y="20" width="2" height="2" fill="#1e6e34"/><rect x="20" y="20" width="2" height="2" fill="#1e6e34"/><rect x="6" y="22" width="2" height="2" fill="#1e6e34"/><rect x="18" y="22" width="2" height="2" fill="#1e6e34"/><rect x="8" y="6" width="10" height="2" fill="#ffffff"/><rect x="6" y="6" width="2" height="2" fill="#b8dcbc"/><rect x="18" y="6" width="2" height="2" fill="#b8dcbc"/><rect x="6" y="8" width="4" height="10" fill="#ffffff"/><rect x="16" y="8" width="4" height="2" fill="#ffffff"/><rect x="10" y="8" width="6" height="2" fill="#b8dcbc"/><rect x="16" y="16" width="4" height="2" fill="#ffffff"/><rect x="10" y="16" width="6" height="2" fill="#6aa874"/><rect x="10" y="18" width="6" height="2" fill="#ffffff"/><rect x="8" y="18" width="2" height="2" fill="#b8dcbc"/><rect x="16" y="18" width="2" height="2" fill="#b8dcbc"/><rect x="10" y="10" width="16" height="2" fill="#6aa874"/><rect x="10" y="12" width="16" height="4" fill="#2f7d44"/></g></svg>
<div class="a txt" style="left:314px;top:694px;letter-spacing:-0.47px;color:#000">SearchView</div>
<div class="a tri" style="left:199px;top:748px;border-top:8.5px solid transparent;border-bottom:8.5px solid transparent;border-left:14.5px solid #8e8e8e"></div>
<svg class="a" style="left:232px;top:740px" width="32" height="34" viewBox="0 0 32 34"><g shape-rendering="crispEdges"><rect x="4" y="6" width="22" height="26" fill="#f2f6fc"/><rect x="6" y="8" width="18" height="20" fill="#f6f9fd"/><rect x="18" y="6" width="2" height="6" fill="#e4c070"/><rect x="20" y="8" width="2" height="4" fill="#e0bc68"/><rect x="22" y="10" width="2" height="2" fill="#dcb868"/><rect x="10" y="4" width="10" height="2" fill="#a8801c"/><rect x="20" y="6" width="2" height="2" fill="#a8801c"/><rect x="22" y="8" width="2" height="2" fill="#a8801c"/><rect x="24" y="10" width="2" height="8" fill="#a8801c"/><rect x="24" y="28" width="2" height="2" fill="#b89030"/><rect x="4" y="16" width="2" height="16" fill="#8c7428"/><rect x="4" y="16" width="2" height="2" fill="#d8a830"/><rect x="4" y="30" width="22" height="2" fill="#806a28"/><rect x="4" y="2" width="2" height="12" fill="#dce8f2"/><rect x="6" y="2" width="4" height="12" fill="#2c6aa8"/><rect x="8" y="2" width="2" height="12" fill="#4a88c0"/><rect x="0" y="12" width="2" height="4" fill="#dce8f2"/><rect x="2" y="12" width="6" height="4" fill="#3a78b0"/><rect x="6" y="18" width="10" height="10" fill="#e8eef6"/><rect x="16" y="18" width="6" height="10" fill="#e8eef6"/><rect x="24" y="18" width="6" height="10" fill="#e8eef6"/><rect x="10" y="18" width="2" height="2" fill="#0a1f5a"/><rect x="8" y="20" width="2" height="6" fill="#0a1f5a"/><rect x="12" y="20" width="2" height="6" fill="#0a1f5a"/><rect x="10" y="26" width="2" height="2" fill="#0a1f5a"/><rect x="10" y="20" width="2" height="6" fill="#d8dde8"/><rect x="26" y="18" width="2" height="2" fill="#0a1f5a"/><rect x="24" y="20" width="2" height="6" fill="#0a1f5a"/><rect x="28" y="20" width="2" height="6" fill="#0a1f5a"/><rect x="26" y="26" width="2" height="2" fill="#0a1f5a"/><rect x="26" y="20" width="2" height="6" fill="#d8dde8"/><rect x="18" y="18" width="2" height="10" fill="#0a1f5a"/><rect x="16" y="18" width="2" height="2" fill="#b0b8cc"/></g></svg>
<div class="a txt" style="left:274px;top:732px;letter-spacing:0.05px;color:#000">a.class</div>
<div class="a tri" style="left:39px;top:786px;border-top:8.5px solid transparent;border-bottom:8.5px solid transparent;border-left:14.5px solid #8e8e8e"></div>
<svg class="a" style="left:74px;top:782px" width="26" height="26" viewBox="0 0 26 26"><g shape-rendering="crispEdges"><rect x="2" y="2" width="22" height="22" fill="#c47420"/><rect x="2" y="22" width="22" height="2" fill="#a4520f"/><rect x="22" y="2" width="2" height="22" fill="#b05e18"/><rect x="4" y="4" width="18" height="18" fill="#e4c8a0"/><rect x="5" y="5" width="6" height="6" fill="#ecd4a8"/><rect x="6" y="6" width="4" height="4" fill="#efd8ac"/><rect x="15" y="5" width="6" height="6" fill="#ecd4a8"/><rect x="16" y="6" width="4" height="4" fill="#efd8ac"/><rect x="5" y="15" width="6" height="6" fill="#ecd4a8"/><rect x="6" y="16" width="4" height="4" fill="#efd8ac"/><rect x="15" y="15" width="6" height="6" fill="#ecd4a8"/><rect x="16" y="16" width="4" height="4" fill="#efd8ac"/><rect x="6" y="6" width="2" height="2" fill="#fff8c4"/><rect x="16" y="6" width="2" height="2" fill="#fff8c4"/><rect x="6" y="16" width="2" height="2" fill="#fff8c4"/><rect x="16" y="16" width="2" height="2" fill="#fff8c4"/><rect x="12" y="2" width="2" height="22" fill="#9a644c"/><rect x="2" y="12" width="22" height="2" fill="#9a644c"/><rect x="12" y="0" width="2" height="2" fill="#5c2a0c"/><rect x="12" y="24" width="2" height="2" fill="#5c2a0c"/><rect x="0" y="12" width="2" height="2" fill="#5c2a0c"/><rect x="24" y="12" width="2" height="2" fill="#5c2a0c"/><rect x="12" y="10" width="2" height="6" fill="#74402c"/><rect x="10" y="12" width="6" height="2" fill="#74402c"/></g></svg>
<div class="a txt" style="left:114px;top:770px;letter-spacing:0px;color:#000">b.a</div>
<div class="a tri" style="left:39px;top:824px;border-top:8.5px solid transparent;border-bottom:8.5px solid transparent;border-left:14.5px solid #8e8e8e"></div>
<svg class="a" style="left:74px;top:820px" width="26" height="26" viewBox="0 0 26 26"><g shape-rendering="crispEdges"><rect x="2" y="2" width="22" height="22" fill="#c47420"/><rect x="2" y="22" width="22" height="2" fill="#a4520f"/><rect x="22" y="2" width="2" height="22" fill="#b05e18"/><rect x="4" y="4" width="18" height="18" fill="#e4c8a0"/><rect x="5" y="5" width="6" height="6" fill="#ecd4a8"/><rect x="6" y="6" width="4" height="4" fill="#efd8ac"/><rect x="15" y="5" width="6" height="6" fill="#ecd4a8"/><rect x="16" y="6" width="4" height="4" fill="#efd8ac"/><rect x="5" y="15" width="6" height="6" fill="#ecd4a8"/><rect x="6" y="16" width="4" height="4" fill="#efd8ac"/><rect x="15" y="15" width="6" height="6" fill="#ecd4a8"/><rect x="16" y="16" width="4" height="4" fill="#efd8ac"/><rect x="6" y="6" width="2" height="2" fill="#fff8c4"/><rect x="16" y="6" width="2" height="2" fill="#fff8c4"/><rect x="6" y="16" width="2" height="2" fill="#fff8c4"/><rect x="16" y="16" width="2" height="2" fill="#fff8c4"/><rect x="12" y="2" width="2" height="22" fill="#9a644c"/><rect x="2" y="12" width="22" height="2" fill="#9a644c"/><rect x="12" y="0" width="2" height="2" fill="#5c2a0c"/><rect x="12" y="24" width="2" height="2" fill="#5c2a0c"/><rect x="0" y="12" width="2" height="2" fill="#5c2a0c"/><rect x="24" y="12" width="2" height="2" fill="#5c2a0c"/><rect x="12" y="10" width="2" height="6" fill="#74402c"/><rect x="10" y="12" width="6" height="2" fill="#74402c"/></g></svg>
<div class="a txt" style="left:114px;top:808px;letter-spacing:0px;color:#000">c</div>
<div class="a tri" style="left:39px;top:862px;border-top:8.5px solid transparent;border-bottom:8.5px solid transparent;border-left:14.5px solid #8e8e8e"></div>
<svg class="a" style="left:74px;top:858px" width="26" height="26" viewBox="0 0 26 26"><g shape-rendering="crispEdges"><rect x="2" y="2" width="22" height="22" fill="#c47420"/><rect x="2" y="22" width="22" height="2" fill="#a4520f"/><rect x="22" y="2" width="2" height="22" fill="#b05e18"/><rect x="4" y="4" width="18" height="18" fill="#e4c8a0"/><rect x="5" y="5" width="6" height="6" fill="#ecd4a8"/><rect x="6" y="6" width="4" height="4" fill="#efd8ac"/><rect x="15" y="5" width="6" height="6" fill="#ecd4a8"/><rect x="16" y="6" width="4" height="4" fill="#efd8ac"/><rect x="5" y="15" width="6" height="6" fill="#ecd4a8"/><rect x="6" y="16" width="4" height="4" fill="#efd8ac"/><rect x="15" y="15" width="6" height="6" fill="#ecd4a8"/><rect x="16" y="16" width="4" height="4" fill="#efd8ac"/><rect x="6" y="6" width="2" height="2" fill="#fff8c4"/><rect x="16" y="6" width="2" height="2" fill="#fff8c4"/><rect x="6" y="16" width="2" height="2" fill="#fff8c4"/><rect x="16" y="16" width="2" height="2" fill="#fff8c4"/><rect x="12" y="2" width="2" height="22" fill="#9a644c"/><rect x="2" y="12" width="22" height="2" fill="#9a644c"/><rect x="12" y="0" width="2" height="2" fill="#5c2a0c"/><rect x="12" y="24" width="2" height="2" fill="#5c2a0c"/><rect x="0" y="12" width="2" height="2" fill="#5c2a0c"/><rect x="24" y="12" width="2" height="2" fill="#5c2a0c"/><rect x="12" y="10" width="2" height="6" fill="#74402c"/><rect x="10" y="12" width="6" height="2" fill="#74402c"/></g></svg>
<div class="a txt" style="left:114px;top:846px;letter-spacing:1.3px;color:#000">com</div>
<div class="a tri" style="left:39px;top:900px;border-top:8.5px solid transparent;border-bottom:8.5px solid transparent;border-left:14.5px solid #8e8e8e"></div>
<svg class="a" style="left:74px;top:896px" width="26" height="26" viewBox="0 0 26 26"><g shape-rendering="crispEdges"><rect x="2" y="2" width="22" height="22" fill="#c47420"/><rect x="2" y="22" width="22" height="2" fill="#a4520f"/><rect x="22" y="2" width="2" height="22" fill="#b05e18"/><rect x="4" y="4" width="18" height="18" fill="#e4c8a0"/><rect x="5" y="5" width="6" height="6" fill="#ecd4a8"/><rect x="6" y="6" width="4" height="4" fill="#efd8ac"/><rect x="15" y="5" width="6" height="6" fill="#ecd4a8"/><rect x="16" y="6" width="4" height="4" fill="#efd8ac"/><rect x="5" y="15" width="6" height="6" fill="#ecd4a8"/><rect x="6" y="16" width="4" height="4" fill="#efd8ac"/><rect x="15" y="15" width="6" height="6" fill="#ecd4a8"/><rect x="16" y="16" width="4" height="4" fill="#efd8ac"/><rect x="6" y="6" width="2" height="2" fill="#fff8c4"/><rect x="16" y="6" width="2" height="2" fill="#fff8c4"/><rect x="6" y="16" width="2" height="2" fill="#fff8c4"/><rect x="16" y="16" width="2" height="2" fill="#fff8c4"/><rect x="12" y="2" width="2" height="22" fill="#9a644c"/><rect x="2" y="12" width="22" height="2" fill="#9a644c"/><rect x="12" y="0" width="2" height="2" fill="#5c2a0c"/><rect x="12" y="24" width="2" height="2" fill="#5c2a0c"/><rect x="0" y="12" width="2" height="2" fill="#5c2a0c"/><rect x="24" y="12" width="2" height="2" fill="#5c2a0c"/><rect x="12" y="10" width="2" height="6" fill="#74402c"/><rect x="10" y="12" width="6" height="2" fill="#74402c"/></g></svg>
<div class="a txt" style="left:114px;top:884px;letter-spacing:1.3px;color:#000">ct</div>
<div class="a tri" style="left:39px;top:938px;border-top:8.5px solid transparent;border-bottom:8.5px solid transparent;border-left:14.5px solid #8e8e8e"></div>
<svg class="a" style="left:74px;top:934px" width="26" height="26" viewBox="0 0 26 26"><g shape-rendering="crispEdges"><rect x="2" y="2" width="22" height="22" fill="#c47420"/><rect x="2" y="22" width="22" height="2" fill="#a4520f"/><rect x="22" y="2" width="2" height="22" fill="#b05e18"/><rect x="4" y="4" width="18" height="18" fill="#e4c8a0"/><rect x="5" y="5" width="6" height="6" fill="#ecd4a8"/><rect x="6" y="6" width="4" height="4" fill="#efd8ac"/><rect x="15" y="5" width="6" height="6" fill="#ecd4a8"/><rect x="16" y="6" width="4" height="4" fill="#efd8ac"/><rect x="5" y="15" width="6" height="6" fill="#ecd4a8"/><rect x="6" y="16" width="4" height="4" fill="#efd8ac"/><rect x="15" y="15" width="6" height="6" fill="#ecd4a8"/><rect x="16" y="16" width="4" height="4" fill="#efd8ac"/><rect x="6" y="6" width="2" height="2" fill="#fff8c4"/><rect x="16" y="6" width="2" height="2" fill="#fff8c4"/><rect x="6" y="16" width="2" height="2" fill="#fff8c4"/><rect x="16" y="16" width="2" height="2" fill="#fff8c4"/><rect x="12" y="2" width="2" height="22" fill="#9a644c"/><rect x="2" y="12" width="22" height="2" fill="#9a644c"/><rect x="12" y="0" width="2" height="2" fill="#5c2a0c"/><rect x="12" y="24" width="2" height="2" fill="#5c2a0c"/><rect x="0" y="12" width="2" height="2" fill="#5c2a0c"/><rect x="24" y="12" width="2" height="2" fill="#5c2a0c"/><rect x="12" y="10" width="2" height="6" fill="#74402c"/><rect x="10" y="12" width="6" height="2" fill="#74402c"/></g></svg>
<div class="a txt" style="left:114px;top:922px;letter-spacing:1.04px;color:#000">oicq.wlogin_sdk</div>
<div class="a" style="left:504px;top:737px;width:18px;height:20px;background:#fbfbfb;border-top:1px solid #d4d4d4;border-bottom:1px solid #d4d4d4"></div>
<div class="a" style="left:507px;top:741px;width:12px;height:12px;border-radius:50%;background:radial-gradient(circle at 50% 35%,#e2e2e2,#c4c4c4)"></div>
<div class="a" style="left:539px;top:196px;width:919px;height:1112px;background:#e4e4e4;border:1px solid #dcdcdc;border-radius:8px"></div>
<div class="a tab sel" style="left:839px;top:172px;width:320px;"></div>
<svg class="a" style="left:858px;top:176px" width="32" height="34" viewBox="0 0 32 34"><g shape-rendering="crispEdges"><rect x="4" y="6" width="22" height="26" fill="#f2f6fc"/><rect x="6" y="8" width="18" height="20" fill="#f6f9fd"/><rect x="18" y="6" width="2" height="6" fill="#e4c070"/><rect x="20" y="8" width="2" height="4" fill="#e0bc68"/><rect x="22" y="10" width="2" height="2" fill="#dcb868"/><rect x="10" y="4" width="10" height="2" fill="#a8801c"/><rect x="20" y="6" width="2" height="2" fill="#a8801c"/><rect x="22" y="8" width="2" height="2" fill="#a8801c"/><rect x="24" y="10" width="2" height="8" fill="#a8801c"/><rect x="24" y="28" width="2" height="2" fill="#b89030"/><rect x="4" y="16" width="2" height="16" fill="#8c7428"/><rect x="4" y="16" width="2" height="2" fill="#d8a830"/><rect x="4" y="30" width="22" height="2" fill="#806a28"/><rect x="4" y="2" width="2" height="12" fill="#dce8f2"/><rect x="6" y="2" width="4" height="12" fill="#2c6aa8"/><rect x="8" y="2" width="2" height="12" fill="#4a88c0"/><rect x="0" y="12" width="2" height="4" fill="#dce8f2"/><rect x="2" y="12" width="6" height="4" fill="#3a78b0"/><rect x="6" y="18" width="10" height="10" fill="#e8eef6"/><rect x="16" y="18" width="6" height="10" fill="#e8eef6"/><rect x="24" y="18" width="6" height="10" fill="#e8eef6"/><rect x="10" y="18" width="2" height="2" fill="#0a1f5a"/><rect x="8" y="20" width="2" height="6" fill="#0a1f5a"/><rect x="12" y="20" width="2" height="6" fill="#0a1f5a"/><rect x="10" y="26" width="2" height="2" fill="#0a1f5a"/><rect x="10" y="20" width="2" height="6" fill="#d8dde8"/><rect x="26" y="18" width="2" height="2" fill="#0a1f5a"/><rect x="24" y="20" width="2" height="6" fill="#0a1f5a"/><rect x="28" y="20" width="2" height="6" fill="#0a1f5a"/><rect x="26" y="26" width="2" height="2" fill="#0a1f5a"/><rect x="26" y="20" width="2" height="6" fill="#d8dde8"/><rect x="18" y="18" width="2" height="10" fill="#0a1f5a"/><rect x="16" y="18" width="2" height="2" fill="#b0b8cc"/></g></svg>
<div class="a txt" style="left:896px;top:168px;letter-spacing:-0.07px">SearchView.class</div>
<svg class="a" style="left:1120px;top:182px" width="20" height="20" viewBox="0 0 20 20"><g shape-rendering="crispEdges"><rect x="2" y="2" width="2" height="2" fill="#fff"/><rect x="4" y="2" width="2" height="2" fill="#fff"/><rect x="14" y="2" width="2" height="2" fill="#fff"/><rect x="16" y="2" width="2" height="2" fill="#fff"/><rect x="2" y="4" width="2" height="2" fill="#fff"/><rect x="4" y="4" width="2" height="2" fill="#fff"/><rect x="6" y="4" width="2" height="2" fill="#fff"/><rect x="12" y="4" width="2" height="2" fill="#fff"/><rect x="14" y="4" width="2" height="2" fill="#fff"/><rect x="16" y="4" width="2" height="2" fill="#fff"/><rect x="4" y="6" width="2" height="2" fill="#fff"/><rect x="6" y="6" width="2" height="2" fill="#fff"/><rect x="8" y="6" width="2" height="2" fill="#fff"/><rect x="10" y="6" width="2" height="2" fill="#fff"/><rect x="12" y="6" width="2" height="2" fill="#fff"/><rect x="14" y="6" width="2" height="2" fill="#fff"/><rect x="6" y="8" width="2" height="2" fill="#fff"/><rect x="8" y="8" width="2" height="2" fill="#fff"/><rect x="10" y="8" width="2" height="2" fill="#fff"/><rect x="12" y="8" width="2" height="2" fill="#fff"/><rect x="6" y="10" width="2" height="2" fill="#fff"/><rect x="8" y="10" width="2" height="2" fill="#fff"/><rect x="10" y="10" width="2" height="2" fill="#fff"/><rect x="12" y="10" width="2" height="2" fill="#fff"/><rect x="4" y="12" width="2" height="2" fill="#fff"/><rect x="6" y="12" width="2" height="2" fill="#fff"/><rect x="8" y="12" width="2" height="2" fill="#fff"/><rect x="10" y="12" width="2" height="2" fill="#fff"/><rect x="12" y="12" width="2" height="2" fill="#fff"/><rect x="14" y="12" width="2" height="2" fill="#fff"/><rect x="2" y="14" width="2" height="2" fill="#fff"/><rect x="4" y="14" width="2" height="2" fill="#fff"/><rect x="6" y="14" width="2" height="2" fill="#fff"/><rect x="12" y="14" width="2" height="2" fill="#fff"/><rect x="14" y="14" width="2" height="2" fill="#fff"/><rect x="16" y="14" width="2" height="2" fill="#fff"/><rect x="2" y="16" width="2" height="2" fill="#fff"/><rect x="4" y="16" width="2" height="2" fill="#fff"/><rect x="14" y="16" width="2" height="2" fill="#fff"/><rect x="16" y="16" width="2" height="2" fill="#fff"/><rect x="0" y="0" width="2" height="2" fill="#74695a"/><rect x="2" y="0" width="2" height="2" fill="#74695a"/><rect x="4" y="0" width="2" height="2" fill="#74695a"/><rect x="14" y="0" width="2" height="2" fill="#74695a"/><rect x="16" y="0" width="2" height="2" fill="#74695a"/><rect x="18" y="0" width="2" height="2" fill="#74695a"/><rect x="0" y="2" width="2" height="2" fill="#74695a"/><rect x="6" y="2" width="2" height="2" fill="#74695a"/><rect x="12" y="2" width="2" height="2" fill="#74695a"/><rect x="18" y="2" width="2" height="2" fill="#74695a"/><rect x="0" y="4" width="2" height="2" fill="#74695a"/><rect x="8" y="4" width="2" height="2" fill="#74695a"/><rect x="10" y="4" width="2" height="2" fill="#74695a"/><rect x="18" y="4" width="2" height="2" fill="#74695a"/><rect x="2" y="6" width="2" height="2" fill="#74695a"/><rect x="16" y="6" width="2" height="2" fill="#74695a"/><rect x="4" y="8" width="2" height="2" fill="#74695a"/><rect x="14" y="8" width="2" height="2" fill="#74695a"/><rect x="4" y="10" width="2" height="2" fill="#74695a"/><rect x="14" y="10" width="2" height="2" fill="#74695a"/><rect x="2" y="12" width="2" height="2" fill="#74695a"/><rect x="16" y="12" width="2" height="2" fill="#74695a"/><rect x="0" y="14" width="2" height="2" fill="#74695a"/><rect x="8" y="14" width="2" height="2" fill="#74695a"/><rect x="10" y="14" width="2" height="2" fill="#74695a"/><rect x="18" y="14" width="2" height="2" fill="#74695a"/><rect x="0" y="16" width="2" height="2" fill="#74695a"/><rect x="6" y="16" width="2" height="2" fill="#74695a"/><rect x="12" y="16" width="2" height="2" fill="#74695a"/><rect x="18" y="16" width="2" height="2" fill="#74695a"/><rect x="0" y="18" width="2" height="2" fill="#74695a"/><rect x="2" y="18" width="2" height="2" fill="#74695a"/><rect x="4" y="18" width="2" height="2" fill="#74695a"/><rect x="14" y="18" width="2" height="2" fill="#74695a"/><rect x="16" y="18" width="2" height="2" fill="#74695a"/><rect x="18" y="18" width="2" height="2" fill="#74695a"/></g></svg>
<div class="a" style="left:544px;top:231px;width:882px;height:1071px;background:#fff;border-top:2px solid #565656;border-left:2px solid #8a8a8a;border-right:2px solid #8a8a8a;border-bottom:2px solid #8a8a8a"></div>
<div class="a" style="left:1426px;top:231px;width:28px;height:3px;background:#94c4fa"></div>
<div class="a" style="left:1426px;top:234px;width:28px;height:1072px;background:#ececec"></div>
<div class="a" style="left:572px;top:233px;width:1px;height:1037px;background:#e2e2e2"></div>
<div class="a" style="left:1392px;top:233px;width:30px;height:1037px;background:#f9f9f9;border-left:1.5px solid #e6e6e6;border-right:2px solid #ececec"></div>
<div class="a" style="left:1400px;top:545px;width:16px;height:36px;border-radius:8px;background:#c1c1c1"></div>
<div class="a" style="left:574px;top:1270px;width:818px;height:29px;background:#f9f9f9;border-top:1.5px solid #e6e6e6"></div>
<div class="a" style="left:576px;top:1278px;width:182px;height:16px;border-radius:8px;background:#c1c1c1"></div>
<div class="a" style="left:573px;top:233px;width:819px;height:1037px;overflow:hidden">
<div class="a code" style="top:4px">  <span class="k">private</span> <span class="k">void</span> B(<span class="k">boolean</span> paramBoolean)</div>
<div class="a code" style="top:34px">  {</div>
<div class="a code" style="top:64px">    <span class="k">boolean</span> bool2 = <span class="k">true</span>;</div>
<div class="a code" style="top:94px">    <span class="k">int</span> j = 8;</div>
<div class="a code" style="top:124px">    <span class="k">this</span>.<span class="u">rA</span> = paramBoolean;</div>
<div class="a code" style="top:154px">    <span class="k">int</span> i;</div>
<div class="a code" style="top:184px">    <span class="k">boolean</span> bool1;</div>
<div class="a code" style="top:214px">    <span class="k">if</span> (paramBoolean)</div>
<div class="a code" style="top:244px">    {</div>
<div class="a code" style="top:274px">      i = 0;</div>
<div class="a code" style="top:304px">      <span class="k">if</span> (TextUtils.isEmpty(<span class="k">this</span>.<span class="u">rJ</span>.getText())) {</div>
<div class="a code" style="top:334px">        <span class="k">break</span> label115;</div>
<div class="a code" style="top:364px">      }</div>
<div class="a code" style="top:394px">      bool1 = <span class="k">true</span>;</div>
<div class="a code" style="top:424px">      label33:</div>
<div class="a code" style="top:454px">      <span class="k">this</span>.<span class="u">rC</span>.setVisibility(i);</div>
<div class="a code" style="top:484px">      <span class="u">C</span>(bool1);</div>
<div class="a code" style="top:514px">      Object localObject = <span class="k">this</span>.<span class="u">rH</span>;</div>
<div class="a code" style="top:544px">      <span class="k">if</span> (!paramBoolean) {</div>
<div class="a code" style="top:574px">        <span class="k">break</span> label121;</div>
<div class="a code" style="top:604px">      }</div>
<div class="a code" style="top:634px">      i = 8;</div>
<div class="a code" style="top:664px">      label60:</div>
<div class="a code" style="top:694px">      ((View)localObject).setVisibility(i);</div>
<div class="a code" style="top:724px">      localObject = <span class="k">this</span>.<span class="u">rL</span>;</div>
<div class="a code" style="top:754px">      <span class="k">if</span> (!<span class="k">this</span>.<span class="u">rz</span>) {</div>
<div class="a code" style="top:784px">        <span class="k">break</span> label126;</div>
<div class="a code" style="top:814px">      }</div>
<div class="a code" style="top:844px">      i = j;</div>
<div class="a code" style="top:874px">      label81:</div>
<div class="a code" style="top:904px">      ((ImageView)localObject).setVisibility(i);</div>
<div class="a code" style="top:934px">      <span class="u">cp</span>();</div>
<div class="a code" style="top:964px">      <span class="k">if</span> (bool1) {</div>
<div class="a code" style="top:994px">        <span class="k">break</span> label131;</div>
<div class="a code" style="top:1024px">      }</div>
</div>
<svg class="a" style="left:552px;top:270px" width="18" height="18" viewBox="0 0 18 18"><circle cx="9" cy="9" r="8" fill="#d6ebfa" stroke="#8ea2bf" stroke-width="1.6"/><rect x="4" y="8" width="10" height="2" fill="#0c1028"/></svg>
<svg class="a" style="left:552px;top:480px" width="18" height="18" viewBox="0 0 18 18"><circle cx="9" cy="9" r="8" fill="#d6ebfa" stroke="#8ea2bf" stroke-width="1.6"/><rect x="4" y="8" width="10" height="2" fill="#0c1028"/></svg>
<svg class="a" style="left:552px;top:540px" width="18" height="18" viewBox="0 0 18 18"><circle cx="9" cy="9" r="8" fill="#d6ebfa" stroke="#8ea2bf" stroke-width="1.6"/><rect x="4" y="8" width="10" height="2" fill="#0c1028"/></svg>
<svg class="a" style="left:552px;top:780px" width="18" height="18" viewBox="0 0 18 18"><circle cx="9" cy="9" r="8" fill="#d6ebfa" stroke="#8ea2bf" stroke-width="1.6"/><rect x="4" y="8" width="10" height="2" fill="#0c1028"/></svg>
<svg class="a" style="left:552px;top:990px" width="18" height="18" viewBox="0 0 18 18"><circle cx="9" cy="9" r="8" fill="#d6ebfa" stroke="#8ea2bf" stroke-width="1.6"/><rect x="4" y="8" width="10" height="2" fill="#0c1028"/></svg>
<svg class="a" style="left:552px;top:1200px" width="18" height="18" viewBox="0 0 18 18"><circle cx="9" cy="9" r="8" fill="#d6ebfa" stroke="#8ea2bf" stroke-width="1.6"/><rect x="4" y="8" width="10" height="2" fill="#0c1028"/></svg>
<div class="a txt" style="left:19px;top:1358px;letter-spacing:0.8px">Find:</div>
<div class="a" style="left:91px;top:1361px;width:514px;height:45px;background:#fff;border-top:1px solid #b8b8b8;border-left:1px solid #c4c4c4"></div><div class="a" style="left:92px;top:1362px;width:500px;height:43px;overflow:hidden"><div class="a txt" style="left:11px;top:-2px;letter-spacing:0.7px">SearchActionVerificationClientExtraIntent</div></div>
<div class="a" style="left:604px;top:1361px;width:1px;height:45px;background:#bdbdbd"></div><div class="a" style="left:605px;top:1361px;width:1px;height:45px;background:#fff"></div><div class="a" style="left:606px;top:1363px;width:29px;height:41px;background:linear-gradient(#fff 0%,#fdfdfd 38%,#ebebeb 50%,#ececec 100%);border:1px solid #a8a8a8;border-left:none;border-radius:0 6px 6px 0"></div>
<div class="a tri" style="left:610px;top:1379px;border-left:7px solid transparent;border-right:7px solid transparent;border-top:10px solid #4e4e4e"></div>
<svg class="a" style="left:652px;top:1362px" width="36" height="38" viewBox="0 0 36 38"><g shape-rendering="crispEdges"><rect x="8" y="10" width="22" height="26" fill="#eef3fb"/><rect x="8" y="10" width="22" height="8" fill="#f6f9fd"/><rect x="8" y="28" width="22" height="8" fill="#e4edf8"/><rect x="6" y="28" width="2" height="8" fill="#8898b0"/><rect x="30" y="10" width="2" height="8" fill="#b0a878"/><rect x="30" y="18" width="2" height="8" fill="#a0a090"/><rect x="30" y="26" width="2" height="10" fill="#8898b8"/><rect x="20" y="10" width="8" height="2" fill="#bcc0d8"/><rect x="24" y="14" width="4" height="2" fill="#bcc0d8"/><rect x="24" y="18" width="4" height="2" fill="#bcc0d8"/><rect x="22" y="22" width="6" height="2" fill="#bcc0d8"/><rect x="18" y="26" width="4" height="2" fill="#bcc0d8"/><rect x="24" y="26" width="4" height="2" fill="#bcc0d8"/><rect x="18" y="30" width="10" height="2" fill="#bcc0d8"/><rect x="10" y="30" width="6" height="2" fill="#1a5898"/><rect x="10" y="32" width="6" height="2" fill="#7088c0"/><defs><linearGradient id="nxg" x1="0" y1="0" x2="0" y2="1"><stop offset="0" stop-color="#fffdf0"/><stop offset="1" stop-color="#fbd978"/></linearGradient></defs><polygon points="10,6 16,6 16,18 20,18 20,20 14,26 12,26 6,20 6,18 10,18" fill="url(#nxg)"/><rect x="10" y="4" width="6" height="2" fill="#b87410"/><rect x="8" y="6" width="2" height="12" fill="#b87410"/><rect x="16" y="6" width="2" height="12" fill="#b87410"/><rect x="4" y="16" width="6" height="2" fill="#b87410"/><rect x="16" y="16" width="6" height="2" fill="#b87410"/><rect x="4" y="18" width="2" height="2" fill="#b87410"/><rect x="20" y="18" width="2" height="2" fill="#b87410"/><rect x="6" y="20" width="2" height="2" fill="#b87410"/><rect x="18" y="20" width="2" height="2" fill="#b87410"/><rect x="8" y="22" width="2" height="2" fill="#b87410"/><rect x="16" y="22" width="2" height="2" fill="#b87410"/><rect x="10" y="24" width="2" height="2" fill="#b87410"/><rect x="14" y="24" width="2" height="2" fill="#b87410"/><rect x="12" y="26" width="2" height="2" fill="#b87410"/></g></svg>
<svg class="a" style="left:752px;top:1362px" width="36" height="38" viewBox="0 0 36 38"><g shape-rendering="crispEdges"><rect x="8" y="4" width="22" height="26" fill="#eef3fb"/><rect x="8" y="4" width="22" height="8" fill="#f6f9fd"/><rect x="8" y="22" width="22" height="8" fill="#e4edf8"/><rect x="6" y="4" width="2" height="10" fill="#b0a878"/><rect x="30" y="4" width="2" height="10" fill="#b0a878"/><rect x="30" y="14" width="2" height="8" fill="#a0a090"/><rect x="30" y="22" width="2" height="8" fill="#8898b8"/><rect x="18" y="8" width="10" height="2" fill="#bcc0d8"/><rect x="18" y="12" width="4" height="2" fill="#bcc0d8"/><rect x="24" y="12" width="4" height="2" fill="#bcc0d8"/><rect x="22" y="16" width="6" height="2" fill="#bcc0d8"/><rect x="24" y="20" width="4" height="2" fill="#bcc0d8"/><rect x="24" y="24" width="4" height="2" fill="#bcc0d8"/><rect x="20" y="28" width="8" height="2" fill="#bcc0d8"/><rect x="10" y="6" width="6" height="2" fill="#7088c0"/><rect x="10" y="8" width="6" height="2" fill="#1a5898"/><defs><linearGradient id="pvg" x1="0" y1="0" x2="0" y2="1"><stop offset="0" stop-color="#fffdf0"/><stop offset="1" stop-color="#f8d470"/></linearGradient></defs><polygon points="12,14 14,14 20,20 20,22 16,22 16,34 10,34 10,22 6,22 6,20" fill="url(#pvg)"/><rect x="12" y="12" width="2" height="2" fill="#b87410"/><rect x="10" y="14" width="2" height="2" fill="#b87410"/><rect x="14" y="14" width="2" height="2" fill="#b87410"/><rect x="8" y="16" width="2" height="2" fill="#b87410"/><rect x="16" y="16" width="2" height="2" fill="#b87410"/><rect x="6" y="18" width="2" height="2" fill="#b87410"/><rect x="18" y="18" width="2" height="2" fill="#b87410"/><rect x="4" y="20" width="2" height="4" fill="#b87410"/><rect x="20" y="20" width="2" height="4" fill="#b87410"/><rect x="4" y="22" width="6" height="2" fill="#b87410"/><rect x="16" y="22" width="6" height="2" fill="#b87410"/><rect x="8" y="24" width="2" height="10" fill="#b87410"/><rect x="16" y="24" width="2" height="10" fill="#b87410"/><rect x="10" y="34" width="6" height="2" fill="#b87410"/></g></svg>
<div class="a txt" style="left:695px;top:1357px;font-size:23px;letter-spacing:1px">Next</div>
<div class="a txt" style="left:795px;top:1357px;font-size:23px;letter-spacing:0.24px">Previous</div>
<div class="a" style="left:910px;top:1370px;width:28px;height:28px;background:#fff;border:1px solid #b4b4b4;border-radius:5px"></div>
<div class="a txt" style="left:950px;top:1360px;letter-spacing:0.41px">Case sensitive</div>
<svg class="a" style="left:1450px;top:1372px" width="20" height="20" viewBox="0 0 20 20"><g shape-rendering="crispEdges"><rect x="2" y="2" width="2" height="2" fill="#fff"/><rect x="4" y="2" width="2" height="2" fill="#fff"/><rect x="14" y="2" width="2" height="2" fill="#fff"/><rect x="16" y="2" width="2" height="2" fill="#fff"/><rect x="2" y="4" width="2" height="2" fill="#fff"/><rect x="4" y="4" width="2" height="2" fill="#fff"/><rect x="6" y="4" width="2" height="2" fill="#fff"/><rect x="12" y="4" width="2" height="2" fill="#fff"/><rect x="14" y="4" width="2" height="2" fill="#fff"/><rect x="16" y="4" width="2" height="2" fill="#fff"/><rect x="4" y="6" width="2" height="2" fill="#fff"/><rect x="6" y="6" width="2" height="2" fill="#fff"/><rect x="8" y="6" width="2" height="2" fill="#fff"/><rect x="10" y="6" width="2" height="2" fill="#fff"/><rect x="12" y="6" width="2" height="2" fill="#fff"/><rect x="14" y="6" width="2" height="2" fill="#fff"/><rect x="6" y="8" width="2" height="2" fill="#fff"/><rect x="8" y="8" width="2" height="2" fill="#fff"/><rect x="10" y="8" width="2" height="2" fill="#fff"/><rect x="12" y="8" width="2" height="2" fill="#fff"/><rect x="6" y="10" width="2" height="2" fill="#fff"/><rect x="8" y="10" width="2" height="2" fill="#fff"/><rect x="10" y="10" width="2" height="2" fill="#fff"/><rect x="12" y="10" width="2" height="2" fill="#fff"/><rect x="4" y="12" width="2" height="2" fill="#fff"/><rect x="6" y="12" width="2" height="2" fill="#fff"/><rect x="8" y="12" width="2" height="2" fill="#fff"/><rect x="10" y="12" width="2" height="2" fill="#fff"/><rect x="12" y="12" width="2" height="2" fill="#fff"/><rect x="14" y="12" width="2" height="2" fill="#fff"/><rect x="2" y="14" width="2" height="2" fill="#fff"/><rect x="4" y="14" width="2" height="2" fill="#fff"/><rect x="6" y="14" width="2" height="2" fill="#fff"/><rect x="12" y="14" width="2" height="2" fill="#fff"/><rect x="14" y="14" width="2" height="2" fill="#fff"/><rect x="16" y="14" width="2" height="2" fill="#fff"/><rect x="2" y="16" width="2" height="2" fill="#fff"/><rect x="4" y="16" width="2" height="2" fill="#fff"/><rect x="14" y="16" width="2" height="2" fill="#fff"/><rect x="16" y="16" width="2" height="2" fill="#fff"/><rect x="0" y="0" width="2" height="2" fill="#5e5b4e"/><rect x="2" y="0" width="2" height="2" fill="#5e5b4e"/><rect x="4" y="0" width="2" height="2" fill="#5e5b4e"/><rect x="14" y="0" width="2" height="2" fill="#5e5b4e"/><rect x="16" y="0" width="2" height="2" fill="#5e5b4e"/><rect x="18" y="0" width="2" height="2" fill="#5e5b4e"/><rect x="0" y="2" width="2" height="2" fill="#5e5b4e"/><rect x="6" y="2" width="2" height="2" fill="#5e5b4e"/><rect x="12" y="2" width="2" height="2" fill="#5e5b4e"/><rect x="18" y="2" width="2" height="2" fill="#5e5b4e"/><rect x="0" y="4" width="2" height="2" fill="#5e5b4e"/><rect x="8" y="4" width="2" height="2" fill="#5e5b4e"/><rect x="10" y="4" width="2" height="2" fill="#5e5b4e"/><rect x="18" y="4" width="2" height="2" fill="#5e5b4e"/><rect x="2" y="6" width="2" height="2" fill="#5e5b4e"/><rect x="16" y="6" width="2" height="2" fill="#5e5b4e"/><rect x="4" y="8" width="2" height="2" fill="#5e5b4e"/><rect x="14" y="8" width="2" height="2" fill="#5e5b4e"/><rect x="4" y="10" width="2" height="2" fill="#5e5b4e"/><rect x="14" y="10" width="2" height="2" fill="#5e5b4e"/><rect x="2" y="12" width="2" height="2" fill="#5e5b4e"/><rect x="16" y="12" width="2" height="2" fill="#5e5b4e"/><rect x="0" y="14" width="2" height="2" fill="#5e5b4e"/><rect x="8" y="14" width="2" height="2" fill="#5e5b4e"/><rect x="10" y="14" width="2" height="2" fill="#5e5b4e"/><rect x="18" y="14" width="2" height="2" fill="#5e5b4e"/><rect x="0" y="16" width="2" height="2" fill="#5e5b4e"/><rect x="6" y="16" width="2" height="2" fill="#5e5b4e"/><rect x="12" y="16" width="2" height="2" fill="#5e5b4e"/><rect x="18" y="16" width="2" height="2" fill="#5e5b4e"/><rect x="0" y="18" width="2" height="2" fill="#5e5b4e"/><rect x="2" y="18" width="2" height="2" fill="#5e5b4e"/><rect x="4" y="18" width="2" height="2" fill="#5e5b4e"/><rect x="14" y="18" width="2" height="2" fill="#5e5b4e"/><rect x="16" y="18" width="2" height="2" fill="#5e5b4e"/><rect x="18" y="18" width="2" height="2" fill="#5e5b4e"/></g></svg>
</body></html>
